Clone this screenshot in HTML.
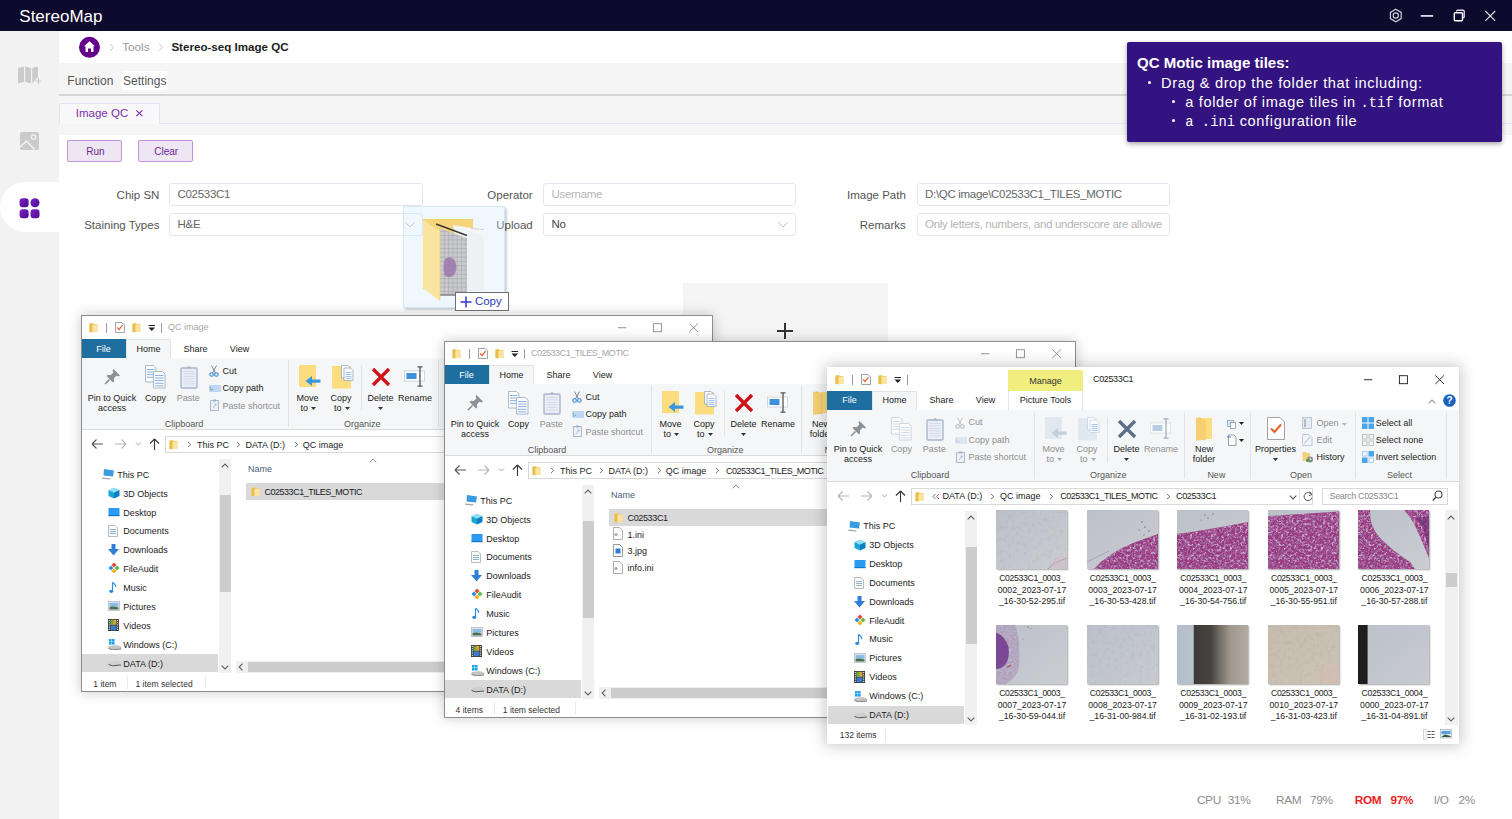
<!DOCTYPE html><html><head><meta charset="utf-8"><title>StereoMap</title><style>
*{margin:0;padding:0;box-sizing:border-box}
html,body{width:1512px;height:819px;overflow:hidden;background:#fff;font-family:"Liberation Sans",sans-serif;position:relative}
.a{position:absolute}
.t{position:absolute;white-space:nowrap;line-height:1}
</style></head><body>
<div class="a" style="left:0;top:0;width:1512px;height:31px;background:#0e0a2e"></div>
<div class="t" style="left:19.3px;top:7.61px;font-size:17px;color:#fff;">StereoMap</div>
<svg class="a" style="left:1380px;top:0" width="132" height="31" viewBox="1380 0 132 31">
<polygon points="1395.8,9.3 1401.2,12.4 1401.2,18.6 1395.8,21.7 1390.4,18.6 1390.4,12.4" fill="none" stroke="#cfcdd8" stroke-width="1.2"/>
<circle cx="1395.8" cy="15.5" r="2.6" fill="none" stroke="#cfcdd8" stroke-width="1.2"/>
<rect x="1420.7" y="15" width="12.4" height="1.8" fill="#dcdae4"/>
<rect x="1454.3" y="12.8" width="8.2" height="8" rx="1" fill="none" stroke="#fff" stroke-width="1.4"/>
<path d="M1456.6 11.5 V11.2 q0-1 1-1 h5.6 q1 0 1 1 v5.6 q0 1 -1 1 h-0.3" fill="none" stroke="#dcdae4" stroke-width="1.4"/>
<path d="M1485.3 11 L1495.2 20.9 M1495.2 11 L1485.3 20.9" stroke="#dcdae4" stroke-width="1.2"/>
</svg>
<div class="a" style="left:0;top:31px;width:59px;height:788px;background:#f2f2f2"></div>
<div class="a" style="left:0;top:182px;width:59px;height:50px;background:#fff;border-radius:25px 0 0 25px"></div>
<svg class="a" style="left:16px;top:64px" width="28" height="22" viewBox="0 0 28 22">
<path d="M2 4 L8 2.5 L8 18 L2 19.5 Z M9.2 2.5 L15 4 L15 19.5 L9.2 18 Z M16.2 4 L22 2.5 L22 13 L16.2 19.5 Z" fill="#cbcbcb"/>
<path d="M22.5 14 v6 M19.5 17 h6" stroke="#cbcbcb" stroke-width="1.1"/>
</svg>
<svg class="a" style="left:19px;top:131px" width="21" height="20" viewBox="0 0 21 20">
<rect x="1" y="1" width="19" height="18" rx="1.5" fill="#cbcbcb"/>
<path d="M0.5 16.5 L7.5 10 L15.5 18.5" stroke="#f2f2f2" stroke-width="1.5" fill="none"/>
<circle cx="14.6" cy="6" r="2.2" fill="none" stroke="#f2f2f2" stroke-width="1.3"/>
</svg>
<svg class="a" style="left:19px;top:197px" width="22" height="22" viewBox="0 0 22 22">
<defs><linearGradient id="pg" x1="0" y1="0" x2="1" y2="1"><stop offset="0" stop-color="#7d22c4"/><stop offset="1" stop-color="#4c0b93"/></linearGradient></defs>
<rect x="0.6" y="1.2" width="9" height="9" rx="3" fill="url(#pg)"/>
<circle cx="16" cy="5.7" r="4.5" fill="url(#pg)"/>
<rect x="0.6" y="12.2" width="9" height="9" rx="3" fill="url(#pg)"/>
<rect x="11.5" y="12.2" width="9" height="9" rx="3" fill="url(#pg)"/>
</svg>
<svg class="a" style="left:78px;top:36px" width="22" height="22" viewBox="0 0 22 22">
<circle cx="11.5" cy="11.3" r="10.5" fill="#64008c"/>
<path d="M11.5 5.2 L17 10.2 L15.5 10.2 L15.5 16 L13 16 L13 12.5 L10 12.5 L10 16 L7.5 16 L7.5 10.2 L6 10.2 Z" fill="#fff"/>
</svg>
<svg class="a" style="left:109px;top:43px" width="6" height="9" viewBox="0 0 6 9"><path d="M1.2 1 L4.6 4.4 L1.2 7.8" fill="none" stroke="#c4c4c4" stroke-width="1"/></svg>
<div class="t" style="left:122.2px;top:40.80px;font-size:11.7px;color:#9a9a9a;">Tools</div>
<svg class="a" style="left:158px;top:43px" width="6" height="9" viewBox="0 0 6 9"><path d="M1.2 1 L4.6 4.4 L1.2 7.8" fill="none" stroke="#c4c4c4" stroke-width="1"/></svg>
<div class="t" style="left:171.4px;top:40.88px;font-size:11.6px;color:#1e1e1e;font-weight:bold">Stereo-seq Image QC</div>
<div class="a" style="left:59px;top:63px;width:1453px;height:72px;background:#f5f5f5"></div>
<div class="a" style="left:59px;top:94px;width:1453px;height:1.5px;background:#d6d6d6"></div>
<div class="a" style="left:120.5px;top:71px;width:47px;height:19px;background:#fff;border-radius:3px"></div>
<div class="t" style="left:67.3px;top:75.04px;font-size:12px;color:#555;">Function</div>
<div class="t" style="left:123.1px;top:75.04px;font-size:12px;color:#555;">Settings</div>
<div class="a" style="left:59px;top:123px;width:1453px;height:1px;background:#e2e6ee"></div>
<div class="a" style="left:59px;top:103px;width:101px;height:21px;background:#f9f9fb;border:1px solid #e0e4ec;border-bottom:none;border-radius:2px 2px 0 0"></div>
<div class="t" style="left:75.8px;top:108.47px;font-size:11.5px;color:#7b2fa8;">Image QC</div>
<svg class="a" style="left:135px;top:109px" width="9" height="9" viewBox="0 0 9 9"><path d="M1.3 1.4 L7.4 7.2 M7.4 1.4 L1.3 7.2" stroke="#7b2fa8" stroke-width="1.1"/></svg>
<div class="a" style="left:67px;top:140px;width:55px;height:22px;background:#efe6f4;border:1px solid #c195d9;border-radius:2px"></div>
<div class="t" style="left:86.2px;top:146.94px;font-size:10px;color:#6a2a92;">Run</div>
<div class="a" style="left:138px;top:140px;width:55px;height:22px;background:#efe6f4;border:1px solid #c195d9;border-radius:2px"></div>
<div class="t" style="left:154.2px;top:146.94px;font-size:10px;color:#6a2a92;">Clear</div>
<div class="t" style="right:1352.6px;top:189.67px;font-size:11.5px;color:#555;text-align:right">Chip SN</div>
<div class="a" style="left:169px;top:183px;width:253.5px;height:23px;border:1px solid #e3e6ec;border-radius:3px;background:#fff"></div>
<div class="t" style="left:177.5px;top:189.17px;font-size:11.5px;letter-spacing:-0.3px;color:#666">C02533C1</div>
<div class="t" style="right:1352.6px;top:219.57px;font-size:11.5px;color:#555;text-align:right">Staining Types</div>
<div class="a" style="left:169px;top:213px;width:253.5px;height:23px;border:1px solid #e3e6ec;border-radius:3px;background:#fff"></div>
<div class="t" style="left:177.5px;top:219.17px;font-size:11.5px;letter-spacing:-0.3px;color:#666">H&amp;E</div>
<svg class="a" style="left:404.5px;top:221.5px" width="10" height="6" viewBox="0 0 10 6"><path d="M0.5 0.5 L5 5 L9.5 0.5" fill="none" stroke="#bbb" stroke-width="1"/></svg>
<div class="t" style="right:979.3px;top:189.67px;font-size:11.5px;color:#555;text-align:right">Operator</div>
<div class="a" style="left:543px;top:183px;width:253px;height:23px;border:1px solid #e3e6ec;border-radius:3px;background:#fff"></div>
<div class="t" style="left:551.5px;top:189.17px;font-size:11.5px;letter-spacing:-0.3px;color:#b5b5b5">Username</div>
<div class="t" style="right:979.3px;top:219.57px;font-size:11.5px;color:#555;text-align:right">Upload</div>
<div class="a" style="left:543px;top:213px;width:253px;height:23px;border:1px solid #e3e6ec;border-radius:3px;background:#fff"></div>
<div class="t" style="left:551.5px;top:219.17px;font-size:11.5px;letter-spacing:-0.3px;color:#444">No</div>
<svg class="a" style="left:778px;top:221.5px" width="10" height="6" viewBox="0 0 10 6"><path d="M0.5 0.5 L5 5 L9.5 0.5" fill="none" stroke="#bbb" stroke-width="1"/></svg>
<div class="t" style="right:606.2px;top:189.67px;font-size:11.5px;color:#555;text-align:right">Image Path</div>
<div class="a" style="left:916.5px;top:183px;width:253.0px;height:23px;border:1px solid #e3e6ec;border-radius:3px;background:#fff"></div>
<div class="t" style="left:925.0px;top:189.17px;font-size:11.5px;letter-spacing:-0.3px;color:#666">D:\QC image\C02533C1_TILES_MOTIC</div>
<div class="t" style="right:606.2px;top:219.57px;font-size:11.5px;color:#555;text-align:right">Remarks</div>
<div class="a" style="left:916.5px;top:213px;width:253.0px;height:23px;border:1px solid #e3e6ec;border-radius:3px;background:#fff"></div>
<div class="t" style="left:925.0px;top:219.17px;font-size:11.5px;letter-spacing:-0.3px;color:#b5b5b5">Only letters, numbers, and underscore are allowe</div>
<div class="a" style="left:683px;top:283px;width:205px;height:205px;background:#f5f5f5"></div>
<div class="a" style="left:777px;top:330px;width:16px;height:1.6px;background:#333"></div>
<div class="a" style="left:784.2px;top:322.5px;width:1.6px;height:16px;background:#333"></div>
<div class="t" style="left:1196.9px;top:795.01px;font-size:11.8px;color:#8c8c8c;letter-spacing:-0.3px">CPU</div>
<div class="t" style="left:1227.7px;top:795.01px;font-size:11.8px;color:#8c8c8c;letter-spacing:-0.3px">31%</div>
<div class="t" style="left:1276px;top:795.01px;font-size:11.8px;color:#8c8c8c;letter-spacing:-0.3px">RAM</div>
<div class="t" style="left:1310px;top:795.01px;font-size:11.8px;color:#8c8c8c;letter-spacing:-0.3px">79%</div>
<div class="t" style="left:1354.7px;top:795.01px;font-size:11.8px;color:#ee1c1c;font-weight:bold;letter-spacing:-0.3px">ROM</div>
<div class="t" style="left:1390.6px;top:795.01px;font-size:11.8px;color:#ee1c1c;font-weight:bold;letter-spacing:-0.3px">97%</div>
<div class="t" style="left:1433.7px;top:795.01px;font-size:11.8px;color:#8c8c8c;letter-spacing:-0.3px">I/O</div>
<div class="t" style="left:1458.4px;top:795.01px;font-size:11.8px;color:#8c8c8c;letter-spacing:-0.3px">2%</div>
<svg width="0" height="0" style="position:absolute">
<defs>
<linearGradient id="tg_grey" x1="0" y1="0" x2="1" y2="1"><stop offset="0" stop-color="#bcc0c8"/><stop offset="1" stop-color="#cacdd2"/></linearGradient>
<linearGradient id="tg_grey2" x1="0" y1="0" x2="1" y2="1"><stop offset="0" stop-color="#bcc1ca"/><stop offset="1" stop-color="#c7cad1"/></linearGradient>
<linearGradient id="tg_beige" x1="0" y1="0" x2="1" y2="1"><stop offset="0" stop-color="#c5bcaf"/><stop offset="1" stop-color="#cdc3b7"/></linearGradient>
<linearGradient id="tg_dark" x1="0" y1="0" x2="1" y2="0"><stop offset="0" stop-color="#b4bfcb"/><stop offset="0.23" stop-color="#b8c1cb"/><stop offset="0.24" stop-color="#3c3a37"/><stop offset="0.48" stop-color="#47443f"/><stop offset="0.62" stop-color="#77726a"/><stop offset="0.75" stop-color="#a0988e"/><stop offset="1" stop-color="#b3aba1"/></linearGradient>
<filter id="hetex" x="0" y="0" width="100%" height="100%">
<feTurbulence type="fractalNoise" baseFrequency="0.38" numOctaves="3" seed="4" result="n"/>
<feColorMatrix in="n" type="matrix" values="0 0 0 0 0.86  0 0 0 0 0.82  0 0 0 0 0.90  -3.2 0 0 0 1.45" result="w"/>
<feColorMatrix in="n" type="matrix" values="0 0 0 0 0.42  0 0 0 0 0.38  0 0 0 0 0.66  0 -2.8 0 0 1.5" result="bl"/>
<feColorMatrix in="n" type="matrix" values="0 0 0 0 0.55  0 0 0 0 0.10  0 0 0 0 0.34  0 0 -2.5 0 1.3" result="rd"/>
<feMerge result="m"><feMergeNode in="rd"/><feMergeNode in="bl"/><feMergeNode in="w"/></feMerge>
<feComposite in="m" in2="SourceAlpha" operator="in"/>
</filter>
<filter id="specks" x="0" y="0" width="100%" height="100%">
<feTurbulence type="fractalNoise" baseFrequency="0.25" numOctaves="2" seed="9" result="n"/>
<feColorMatrix in="n" type="matrix" values="0 0 0 0 0  0 0 0 0 0  0 0 0 0 0  -4 0 0 0 2.1"/>
</filter>
</defs></svg>
<div class="a" style="left:81px;top:315px;width:632px;height:377px;background:#fff;border:1px solid #8c8c8c;box-shadow:0 0 12px 1px rgba(0,0,0,0.18);overflow:hidden"><div class="a" style="left:-1px;top:-1px;width:632px;height:377px"><svg class="a" style="left:8px;top:7px" width="9" height="11" viewBox="0 0 9 11"><path d="M0.5 1 L4 1 L5 2 L8.5 2 L8.5 10 L0.5 10 Z" fill="#f2d27a"/><path d="M0.5 2.5 L3.5 1.6 L3.5 10.4 L0.5 10 Z" fill="#e8bd4a"/><rect x="3.5" y="3" width="5" height="7" fill="#fbe4a0"/></svg><div class="a" style="left:25px;top:8px;width:1px;height:10px;background:#9a9a9a"></div><svg class="a" style="left:34px;top:7px" width="10" height="11" viewBox="0 0 10 11"><path d="M0.5 0.5 H7 L9.5 3 V10.5 H0.5 Z" fill="#fff" stroke="#8a8a8a" stroke-width="0.8"/><path d="M2.2 5.5 L4 7.5 L7.6 3.2" fill="none" stroke="#e8622a" stroke-width="1.2"/></svg><svg class="a" style="left:51px;top:7px" width="9" height="11" viewBox="0 0 9 11"><path d="M0.5 1 L4 1 L5 2 L8.5 2 L8.5 10 L0.5 10 Z" fill="#f2d27a"/><path d="M0.5 2.5 L3.5 1.6 L3.5 10.4 L0.5 10 Z" fill="#e8bd4a"/><rect x="3.5" y="3" width="5" height="7" fill="#fbe4a0"/></svg><svg class="a" style="left:67px;top:9px" width="8" height="8" viewBox="0 0 8 8"><rect x="0.5" y="1" width="6.5" height="1" fill="#222"/><path d="M0.5 3.5 H7 L3.75 7 Z" fill="#222"/></svg><div class="a" style="left:80px;top:8px;width:1px;height:10px;background:#9a9a9a"></div><div class="t" style="left:87px;top:8.35px;font-size:9px;color:#a8a8a8;">QC image</div><svg class="a" style="left:532px;top:5.5px" width="95" height="15" viewBox="0 0 95 15"><rect x="4.8" y="6.3" width="8.5" height="0.9" fill="#8a8a8a"/><rect x="40.4" y="2.7" width="8" height="8" fill="none" stroke="#8a8a8a" stroke-width="0.9"/><path d="M76.3 2.4 L85 11 M85 2.4 L76.3 11" stroke="#8a8a8a" stroke-width="0.9"/></svg><div class="a" style="left:0px;top:24.3px;width:44.8px;height:18.3px;background:#1e6fa0"></div><div class="t" style="left:-37.6px;width:120px;text-align:center;top:29.85px;font-size:9px;color:#fff;">File</div><div class="a" style="left:44.8px;top:24.3px;width:45.5px;height:19px;background:#f5f6f7;border:1px solid #e2e3e4;border-bottom:none"></div><div class="t" style="left:7.5px;width:120px;text-align:center;top:29.85px;font-size:9px;color:#1b1b1b;">Home</div><div class="t" style="left:54.5px;width:120px;text-align:center;top:29.85px;font-size:9px;color:#1b1b1b;">Share</div><div class="t" style="left:98.5px;width:120px;text-align:center;top:29.85px;font-size:9px;color:#1b1b1b;">View</div><div class="a" style="left:0px;top:42.5px;width:632px;height:72.5px;background:#f5f6f7;border-bottom:1px solid #dadbdc"></div><svg class="a" style="left:22.5px;top:53px" width="17" height="17" viewBox="0 0 17 17"><path d="M9.5 1 L16 7.5 L14.5 8.5 L12.6 7.6 L9.8 10.4 L10.2 13.2 L9 14.4 L2.6 8 L3.8 6.8 L6.6 7.2 L9.4 4.4 L8.5 2.5 Z" fill="#8a9097"/><path d="M5.5 11.5 L1 16" stroke="#8a9097" stroke-width="1.6"/></svg><div class="t" style="left:-29px;width:120px;text-align:center;top:79.05px;font-size:9px;color:#1b1b1b;">Pin to Quick</div><div class="t" style="left:-29px;width:120px;text-align:center;top:89.05px;font-size:9px;color:#1b1b1b;">access</div><svg class="a" style="left:64px;top:49.5px" width="21" height="24" viewBox="0 0 21 24"><path d="M0.5 0.5 H8.5 L11 3 V17 H0.5 Z" fill="#fdfdfd" stroke="#9aa8bd" stroke-width="0.8"/><rect x="2" y="4.0" width="7.5" height="0.9" fill="#7aa7e0"/><rect x="2" y="6.6" width="7.5" height="0.9" fill="#7aa7e0"/><rect x="2" y="9.2" width="7.5" height="0.9" fill="#7aa7e0"/><rect x="2" y="11.8" width="7.5" height="0.9" fill="#7aa7e0"/><path d="M8.5 6.5 H17.5 L20 9 V23 H8.5 Z" fill="#fdfdfd" stroke="#9aa8bd" stroke-width="0.8"/><rect x="10" y="10.0" width="8.5" height="0.9" fill="#7aa7e0"/><rect x="10" y="12.6" width="8.5" height="0.9" fill="#7aa7e0"/><rect x="10" y="15.2" width="8.5" height="0.9" fill="#7aa7e0"/><rect x="10" y="17.8" width="8.5" height="0.9" fill="#7aa7e0"/><rect x="10" y="20.4" width="8.5" height="0.9" fill="#7aa7e0"/></svg><div class="t" style="left:14.400000000000006px;width:120px;text-align:center;top:79.05px;font-size:9px;color:#1b1b1b;">Copy</div><svg class="a" style="left:98.5px;top:49.5px" width="18" height="24" viewBox="0 0 18 24"><rect x="1" y="3" width="16" height="20" rx="1" fill="#e9eef6" stroke="#aab7cf" stroke-width="1.4"/><path d="M6 3.5 L9 0.8 L12 3.5 Z" fill="#aab7cf"/><rect x="3.5" y="6.0" width="11" height="0.7" fill="#c9d3e6"/><rect x="3.5" y="8.5" width="11" height="0.7" fill="#c9d3e6"/><rect x="3.5" y="11.0" width="11" height="0.7" fill="#c9d3e6"/><rect x="3.5" y="13.5" width="11" height="0.7" fill="#c9d3e6"/><rect x="3.5" y="16.0" width="11" height="0.7" fill="#c9d3e6"/><rect x="3.5" y="18.5" width="11" height="0.7" fill="#c9d3e6"/></svg><div class="t" style="left:47.2px;width:120px;text-align:center;top:79.05px;font-size:9px;color:#8f8f8f;">Paste</div><svg class="a" style="left:128px;top:49.5px" width="10" height="12" viewBox="0 0 10 12"><path d="M2.5 0.5 L6.5 8 M7.5 0.5 L3.5 8" stroke="#6e7a88" stroke-width="0.9"/><circle cx="2.6" cy="9.5" r="1.8" fill="none" stroke="#3c8ad8" stroke-width="1.1"/><circle cx="7.4" cy="9.5" r="1.8" fill="none" stroke="#3c8ad8" stroke-width="1.1"/></svg><div class="t" style="left:141.5px;top:52.15px;font-size:9px;color:#1b1b1b;">Cut</div><svg class="a" style="left:128px;top:69.5px" width="12" height="7" viewBox="0 0 12 7"><rect x="0" y="0" width="12" height="7" fill="#bcd8f2"/><text x="1" y="5.5" font-size="5" fill="#456" font-family="Liberation Sans">\-</text></svg><div class="t" style="left:141.5px;top:69.45px;font-size:9px;color:#1b1b1b;">Copy path</div><svg class="a" style="left:128.5px;top:84px" width="9" height="12" viewBox="0 0 9 12"><rect x="0.6" y="1.6" width="7.8" height="10" fill="#eef2f8" stroke="#9fb0cc" stroke-width="0.9"/><rect x="3" y="0.5" width="3" height="2" fill="#9fb0cc"/><path d="M3 9 L6 5 M4.5 5 H6 V6.5" stroke="#9fb0cc" stroke-width="0.8" fill="none"/></svg><div class="t" style="left:141.5px;top:86.75px;font-size:9px;color:#8f8f8f;">Paste shortcut</div><div class="t" style="left:43px;width:120px;text-align:center;top:104.85px;font-size:9px;color:#555;">Clipboard</div><div class="a" style="left:207px;top:45px;width:1px;height:67px;background:#e2e3e5"></div><svg class="a" style="left:218px;top:50px" width="22" height="23" viewBox="0 0 22 23"><rect x="0" y="0" width="17" height="22" fill="#fbdc7f"/><path d="M21.5 14.5 H13 V11 L6.5 16 L13 21 V17.8 H21.5 Z" fill="#3a96dd"/></svg><div class="t" style="left:166.5px;width:120px;text-align:center;top:79.05px;font-size:9px;color:#1b1b1b;">Move</div><div class="t" style="left:219.5px;top:89.05px;font-size:9px;color:#1b1b1b;">to</div><svg class="a" style="left:230px;top:91.5px" width="5" height="3" viewBox="0 0 5 3"><path d="M0 0 H5 L2.5 3 Z" fill="#333"/></svg><svg class="a" style="left:251px;top:49.5px" width="23" height="24" viewBox="0 0 23 24"><rect x="0" y="1" width="19" height="22.5" fill="#fbdc7f"/><path d="M9.5 0.5 H16 L18.5 3 V13 H9.5 Z" fill="#fafcff" stroke="#8ea0bb" stroke-width="0.7"/><path d="M12 3 H18.5 L21 5.5 V15.5 H12 Z" fill="#fafcff" stroke="#8ea0bb" stroke-width="0.7"/><rect x="13.5" y="7" width="6" height="0.8" fill="#8db6ea"/><rect x="13.5" y="9" width="6" height="0.8" fill="#8db6ea"/><rect x="13.5" y="11" width="6" height="0.8" fill="#8db6ea"/><rect x="13.5" y="13" width="6" height="0.8" fill="#8db6ea"/></svg><div class="t" style="left:200px;width:120px;text-align:center;top:79.05px;font-size:9px;color:#1b1b1b;">Copy</div><div class="t" style="left:253px;top:89.05px;font-size:9px;color:#1b1b1b;">to</div><svg class="a" style="left:263.5px;top:91.5px" width="5" height="3" viewBox="0 0 5 3"><path d="M0 0 H5 L2.5 3 Z" fill="#333"/></svg><div class="a" style="left:280px;top:50px;width:1px;height:45px;background:#e2e3e5"></div><svg class="a" style="left:289.5px;top:52px" width="20" height="20" viewBox="0 0 20 20"><path d="M2 2 L18 18 M18 2 L2 18" stroke="#d0121b" stroke-width="3.4"/></svg><div class="t" style="left:239.5px;width:120px;text-align:center;top:79.05px;font-size:9px;color:#1b1b1b;">Delete</div><svg class="a" style="left:297px;top:92px" width="5" height="3" viewBox="0 0 5 3"><path d="M0 0 H5 L2.5 3 Z" fill="#333"/></svg><svg class="a" style="left:322.5px;top:51px" width="23" height="21" viewBox="0 0 23 21"><rect x="0.5" y="5" width="20" height="10" fill="#fff" stroke="#cfd6df" stroke-width="1"/><rect x="2.5" y="7" width="10" height="6" fill="#3d91dd"/><path d="M16 1 V20 M13.5 0.8 H18.5 M13.5 20.2 H18.5" stroke="#555" stroke-width="1.3"/></svg><div class="t" style="left:274px;width:120px;text-align:center;top:79.05px;font-size:9px;color:#1b1b1b;">Rename</div><div class="t" style="left:221.3px;width:120px;text-align:center;top:104.85px;font-size:9px;color:#555;">Organize</div><div class="a" style="left:357px;top:45px;width:1px;height:67px;background:#e2e3e5"></div><svg class="a" style="left:368px;top:50px" width="18" height="24" viewBox="0 0 18 24"><path d="M1 1 L6 0.5 L6 22 L1 23.5 Z" fill="#e9c25a"/><rect x="6" y="1" width="11" height="21" fill="#fbdc7f"/><path d="M1 1 L11 3 V23 L1 23.5 Z" fill="#f6d070"/></svg><div class="t" style="left:317px;width:120px;text-align:center;top:79.05px;font-size:9px;color:#1b1b1b;">New</div><div class="t" style="left:317px;width:120px;text-align:center;top:89.05px;font-size:9px;color:#1b1b1b;">folder</div><svg class="a" style="left:400px;top:51px" width="17" height="11" viewBox="0 0 17 11"><rect x="0.5" y="2.5" width="6" height="6" fill="#dde9f7" stroke="#6c9bd2" stroke-width="0.7"/><rect x="3.5" y="4.5" width="5" height="6" fill="#fff" stroke="#888" stroke-width="0.7"/><path d="M12 4 H17 L14.5 7 Z" fill="#222"/></svg><svg class="a" style="left:400px;top:67px" width="17" height="12" viewBox="0 0 17 12"><path d="M1.5 1 H7 L9 3 V11.5 H1.5 Z" fill="#fff" stroke="#777" stroke-width="0.7"/><path d="M0 3 H4" stroke="#3b7fd0" stroke-width="1"/><path d="M12 5 H17 L14.5 8 Z" fill="#222"/></svg><div class="t" style="left:329.4px;width:120px;text-align:center;top:104.85px;font-size:9px;color:#555;">New</div><div class="a" style="left:423px;top:45px;width:1px;height:67px;background:#e2e3e5"></div><svg class="a" style="left:439.5px;top:50px" width="18" height="23" viewBox="0 0 18 23"><path d="M0.5 0.5 H13 L17.5 5 V22.5 H0.5 Z" fill="#fff" stroke="#8e8e8e" stroke-width="0.8"/><path d="M4 11.5 L7.5 15 L14 7.5" fill="none" stroke="#e8622a" stroke-width="2"/></svg><div class="t" style="left:388.4px;width:120px;text-align:center;top:79.05px;font-size:9px;color:#1b1b1b;">Properties</div><svg class="a" style="left:446px;top:92px" width="5" height="3" viewBox="0 0 5 3"><path d="M0 0 H5 L2.5 3 Z" fill="#333"/></svg><svg class="a" style="left:474.5px;top:50px" width="11" height="12" viewBox="0 0 11 12"><rect x="0.5" y="0.5" width="9" height="11" fill="#e4ebf3" stroke="#a8b6c6" stroke-width="0.7"/><rect x="2" y="2" width="2" height="8" fill="#b0bccb"/></svg><div class="t" style="left:489.4px;top:52.65px;font-size:9px;color:#8f8f8f;">Open</div><svg class="a" style="left:514.5px;top:56.5px" width="5" height="3" viewBox="0 0 5 3"><path d="M0 0 H5 L2.5 3 Z" fill="#bbb"/></svg><svg class="a" style="left:474.5px;top:67px" width="11" height="12" viewBox="0 0 11 12"><path d="M0.5 0.5 H7 L10 3.5 V11.5 H0.5 Z" fill="#f0f4f8" stroke="#a8b6c6" stroke-width="0.7"/><path d="M2.5 9.5 L8 3" stroke="#9fb5d0" stroke-width="1"/></svg><div class="t" style="left:489.4px;top:69.85px;font-size:9px;color:#8f8f8f;">Edit</div><svg class="a" style="left:474.5px;top:84px" width="12" height="12" viewBox="0 0 12 12"><path d="M0.5 1 H4 L5 2 H8 V10 H0.5 Z" fill="#f2d27a"/><circle cx="8" cy="8.5" r="3" fill="#8a8a8a"/><path d="M8 6.8 V8.5 H9.5" stroke="#fff" stroke-width="0.7" fill="none"/><circle cx="5.5" cy="9.5" r="1.6" fill="#3caa3c"/></svg><div class="t" style="left:489.4px;top:87.05px;font-size:9px;color:#1b1b1b;">History</div><div class="t" style="left:414px;width:120px;text-align:center;top:104.85px;font-size:9px;color:#555;">Open</div><div class="a" style="left:527.5px;top:45px;width:1px;height:67px;background:#e2e3e5"></div><svg class="a" style="left:534.5px;top:50px" width="12" height="12" viewBox="0 0 12 12"><rect x="0" y="0" width="5.5" height="5.5" fill="#49a4ea"/><rect x="6.5" y="0" width="5.5" height="5.5" fill="#49a4ea"/><rect x="0" y="6.5" width="5.5" height="5.5" fill="#49a4ea"/><rect x="6.5" y="6.5" width="5.5" height="5.5" fill="#49a4ea"/></svg><div class="t" style="left:548.8px;top:52.65px;font-size:9px;color:#1b1b1b;">Select all</div><svg class="a" style="left:534.5px;top:67px" width="12" height="12" viewBox="0 0 12 12"><rect x="0.5" y="0.5" width="4.5" height="4.5" fill="none" stroke="#b5b5b5" stroke-width="0.8"/><rect x="0.5" y="7.0" width="4.5" height="4.5" fill="none" stroke="#b5b5b5" stroke-width="0.8"/><rect x="7.0" y="0.5" width="4.5" height="4.5" fill="none" stroke="#b5b5b5" stroke-width="0.8"/><rect x="7.0" y="7.0" width="4.5" height="4.5" fill="none" stroke="#b5b5b5" stroke-width="0.8"/></svg><div class="t" style="left:548.8px;top:69.85px;font-size:9px;color:#1b1b1b;">Select none</div><svg class="a" style="left:534.5px;top:84px" width="12" height="12" viewBox="0 0 12 12"><rect x="0.5" y="0.5" width="4.5" height="4.5" fill="none" stroke="#9cc8ef" stroke-width="0.8"/><rect x="6.5" y="0" width="5.5" height="5.5" fill="#49a4ea"/><rect x="0" y="6.5" width="5.5" height="5.5" fill="#49a4ea"/><rect x="7" y="7" width="4.5" height="4.5" fill="none" stroke="#9cc8ef" stroke-width="0.8"/></svg><div class="t" style="left:548.8px;top:87.05px;font-size:9px;color:#1b1b1b;">Invert selection</div><div class="t" style="left:512.4px;width:120px;text-align:center;top:104.85px;font-size:9px;color:#555;">Select</div><div class="a" style="left:618.7px;top:45px;width:1px;height:67px;background:#e2e3e5"></div><svg class="a" style="left:600.5px;top:31.5px" width="8" height="5" viewBox="0 0 8 5"><path d="M0.7 4.3 L4 1 L7.3 4.3" fill="none" stroke="#9a9a9a" stroke-width="1.1"/></svg><svg class="a" style="left:616px;top:27px" width="13" height="13" viewBox="0 0 13 13"><circle cx="6.5" cy="6.5" r="6.3" fill="#1a62c0"/><text x="6.5" y="10.3" font-size="10" font-weight="bold" fill="#fff" text-anchor="middle" font-family="Liberation Sans">?</text></svg><svg class="a" style="left:8px;top:121px" width="80" height="16" viewBox="0 0 80 16"><path d="M3 8 H14 M3 8 L7.5 3.5 M3 8 L7.5 12.5" stroke="#555" stroke-width="1.1" fill="none"/><path d="M26 8 H37 M37 8 L32.5 3.5 M37 8 L32.5 12.5" stroke="#b5b5b5" stroke-width="1.1" fill="none"/><path d="M47 6.5 L49.5 9 L52 6.5" stroke="#999" stroke-width="0.9" fill="none"/><path d="M65.5 14 V3 M65.5 3 L61 7.5 M65.5 3 L70 7.5" stroke="#333" stroke-width="1.1" fill="none"/></svg><div class="a" style="left:84px;top:120.5px;width:401.5px;height:17.5px;background:#fff;border:1px solid #d9d9d9"></div><svg class="a" style="left:88px;top:124px" width="9" height="11" viewBox="0 0 9 11"><path d="M0.5 1 L4 1 L5 2 L8.5 2 L8.5 10 L0.5 10 Z" fill="#f2d27a"/><path d="M0.5 2.5 L3.5 1.6 L3.5 10.4 L0.5 10 Z" fill="#e8bd4a"/><rect x="3.5" y="3" width="5" height="7" fill="#fbe4a0"/></svg><div class="a" style="left:472px;top:121px;width:1px;height:16px;background:#e5e5e5"></div><svg class="a" style="left:475px;top:123px" width="12" height="12" viewBox="0 0 12 12"><path d="M9.5 4.5 A4 4 0 1 0 10 7.5" stroke="#555" stroke-width="1" fill="none"/><path d="M7.5 1.5 L10 4.5 L7 5.5" stroke="#555" stroke-width="1" fill="none"/></svg><svg class="a" style="left:461.5px;top:127.5px" width="8" height="5" viewBox="0 0 8 5"><path d="M0.7 0.7 L4 4 L7.3 0.7" fill="none" stroke="#555" stroke-width="1.1"/></svg><div class="a" style="left:495.3px;top:120.5px;width:125.6px;height:17.5px;background:#fff;border:1px solid #d9d9d9"></div><div class="t" style="left:502.5px;top:126.15px;font-size:9px;color:#8a8a8a;">Search QC image</div><svg class="a" style="left:605px;top:123px" width="11" height="12" viewBox="0 0 11 12"><circle cx="6.5" cy="4.5" r="3.5" fill="none" stroke="#444" stroke-width="1.1"/><path d="M4 7 L0.8 10.5" stroke="#444" stroke-width="1.3"/></svg><svg class="a" style="left:106px;top:126px" width="5" height="7" viewBox="0 0 5 7"><path d="M1 1 L3.8 3.5 L1 6" fill="none" stroke="#666" stroke-width="0.9"/></svg><div class="t" style="left:116px;top:126.15px;font-size:9px;color:#1b1b1b;">This PC</div><svg class="a" style="left:155px;top:126px" width="5" height="7" viewBox="0 0 5 7"><path d="M1 1 L3.8 3.5 L1 6" fill="none" stroke="#666" stroke-width="0.9"/></svg><div class="t" style="left:164.4px;top:126.15px;font-size:9px;color:#1b1b1b;">DATA (D:)</div><svg class="a" style="left:212.7px;top:126px" width="5" height="7" viewBox="0 0 5 7"><path d="M1 1 L3.8 3.5 L1 6" fill="none" stroke="#666" stroke-width="0.9"/></svg><div class="t" style="left:221.7px;top:126.15px;font-size:9px;color:#1b1b1b;">QC image</div><div class="a" style="left:137.5px;top:143.5px;width:12.8px;height:214.5px;background:#f0f0f0"></div><div class="a" style="left:138.5px;top:180px;width:11px;height:97px;background:#cdcdcd"></div><svg class="a" style="left:140px;top:147.5px" width="8" height="5" viewBox="0 0 8 5"><path d="M0.7 4.3 L4 1 L7.3 4.3" fill="none" stroke="#606060" stroke-width="1.1"/></svg><svg class="a" style="left:140px;top:349.5px" width="8" height="5" viewBox="0 0 8 5"><path d="M0.7 0.7 L4 4 L7.3 0.7" fill="none" stroke="#606060" stroke-width="1.1"/></svg><div class="a" style="left:1px;top:339px;width:136px;height:18.3px;background:#d9d9d9"></div><svg class="a" style="left:20.5px;top:152.8px" width="13" height="12" viewBox="0 0 13 12"><path d="M2 1 L12 2.5 L11 8.5 L1.5 7.5 Z" fill="#3b9be0"/><path d="M0.5 9.5 L9 10.5 L7.5 11.5 L0 10.8 Z" fill="#9aa3ad"/></svg><div class="t" style="left:36.3px;top:155.65px;font-size:9px;color:#1b1b1b;">This PC</div><svg class="a" style="left:26.5px;top:171.73000000000002px" width="12" height="12" viewBox="0 0 12 12"><path d="M6 0.5 L11.5 3 L6 5.5 L0.5 3 Z" fill="#8be0f5"/><path d="M0.5 3 L6 5.5 V11.5 L0.5 9 Z" fill="#1aa5d8"/><path d="M11.5 3 L6 5.5 V11.5 L11.5 9 Z" fill="#0b7fbf"/></svg><div class="t" style="left:42.3px;top:174.58px;font-size:9px;color:#1b1b1b;">3D Objects</div><svg class="a" style="left:26.5px;top:191.66000000000003px" width="12" height="10" viewBox="0 0 12 10"><rect x="0.5" y="1" width="11" height="8" fill="#2a9bf5"/><rect x="0.5" y="8" width="11" height="1.2" fill="#1677c9"/></svg><div class="t" style="left:42.3px;top:193.51px;font-size:9px;color:#1b1b1b;">Desktop</div><svg class="a" style="left:26.5px;top:209.59px" width="10" height="12" viewBox="0 0 10 12"><path d="M0.5 0.5 H7 L9.5 3 V11.5 H0.5 Z" fill="#fafafa" stroke="#a0a0a0" stroke-width="0.7"/><rect x="2" y="4" width="6" height="0.8" fill="#7aa0c8"/><rect x="2" y="6" width="6" height="0.8" fill="#7aa0c8"/><rect x="2" y="8" width="6" height="0.8" fill="#7aa0c8"/></svg><div class="t" style="left:42.3px;top:212.44px;font-size:9px;color:#1b1b1b;">Documents</div><svg class="a" style="left:26.5px;top:228.52px" width="11" height="12" viewBox="0 0 11 12"><rect x="3.5" y="0" width="4" height="6" fill="#2f7fd6"/><path d="M0 5 H11 L5.5 11.5 Z" fill="#2f7fd6"/></svg><div class="t" style="left:42.3px;top:231.37px;font-size:9px;color:#1b1b1b;">Downloads</div><svg class="a" style="left:26.5px;top:247.45000000000002px" width="12" height="12" viewBox="0 0 12 12"><path d="M6 0.5 L8.5 3 L6 5.5 L3.5 3 Z" fill="#e8463a"/><path d="M3 3.5 L5.5 6 L3 8.5 L0.5 6 Z" fill="#2f8fe0"/><path d="M9 3.5 L11.5 6 L9 8.5 L6.5 6 Z" fill="#5cbc4a"/><path d="M6 6.5 L8.5 9 L6 11.5 L3.5 9 Z" fill="#f5b01a"/></svg><div class="t" style="left:42.3px;top:250.30px;font-size:9px;color:#1b1b1b;">FileAudit</div><svg class="a" style="left:26.5px;top:266.38px" width="10" height="13" viewBox="0 0 10 13"><path d="M4.5 1.5 V10" stroke="#2d8be0" stroke-width="1.2"/><path d="M4.5 1.2 Q7.5 3 8 5.8" stroke="#2d8be0" stroke-width="1.1" fill="none"/><ellipse cx="3.2" cy="10.3" rx="2" ry="1.6" fill="#2d8be0"/></svg><div class="t" style="left:42.3px;top:269.23px;font-size:9px;color:#1b1b1b;">Music</div><svg class="a" style="left:26.5px;top:286.31px" width="12" height="10" viewBox="0 0 12 10"><rect x="0.5" y="0.5" width="11" height="9" fill="#eef1f4" stroke="#a7b0ba" stroke-width="0.7"/><rect x="1.5" y="1.8" width="9" height="4" fill="#8cbbe6"/><path d="M1.5 8.5 L1.5 6 Q5 4.8 10.5 6.5 V8.5 Z" fill="#4a6e4a"/></svg><div class="t" style="left:42.3px;top:288.16px;font-size:9px;color:#1b1b1b;">Pictures</div><svg class="a" style="left:26.5px;top:304.24px" width="11" height="12" viewBox="0 0 11 12"><rect x="0" y="0" width="11" height="12" fill="#3a3a3a"/><rect x="2.6" y="0.8" width="5.8" height="5" fill="#e0a030"/><rect x="2.6" y="1" width="2.8" height="4.8" fill="#5ab040"/><rect x="2.6" y="6.4" width="5.8" height="4.8" fill="#3d7cc9"/><rect x="0.8" y="1.0" width="1.2" height="1.1" fill="#ddd"/><rect x="9" y="1.0" width="1.2" height="1.1" fill="#ddd"/><rect x="0.8" y="3.2" width="1.2" height="1.1" fill="#ddd"/><rect x="9" y="3.2" width="1.2" height="1.1" fill="#ddd"/><rect x="0.8" y="5.4" width="1.2" height="1.1" fill="#ddd"/><rect x="9" y="5.4" width="1.2" height="1.1" fill="#ddd"/><rect x="0.8" y="7.6" width="1.2" height="1.1" fill="#ddd"/><rect x="9" y="7.6" width="1.2" height="1.1" fill="#ddd"/><rect x="0.8" y="9.8" width="1.2" height="1.1" fill="#ddd"/><rect x="9" y="9.8" width="1.2" height="1.1" fill="#ddd"/></svg><div class="t" style="left:42.3px;top:307.09px;font-size:9px;color:#1b1b1b;">Videos</div><svg class="a" style="left:26.5px;top:323.67px" width="14" height="11" viewBox="0 0 14 11"><rect x="1" y="0" width="2.6" height="2.6" fill="#1fa1f0"/><rect x="4" y="0" width="2.6" height="2.6" fill="#1fa1f0"/><rect x="1" y="3" width="2.6" height="2.6" fill="#1fa1f0"/><rect x="4" y="3" width="2.6" height="2.6" fill="#1fa1f0"/><path d="M0.5 7 L9 6 L13.5 8 L13 10 L4.5 10.8 L0.5 9.5 Z" fill="#c4c4c4"/><path d="M0.5 9.5 L4.5 10.8 L13 10 " stroke="#6a6a6a" stroke-width="0.8" fill="none"/></svg><div class="t" style="left:42.3px;top:326.02px;font-size:9px;color:#1b1b1b;">Windows (C:)</div><svg class="a" style="left:26.5px;top:344.1px" width="14" height="8" viewBox="0 0 14 8"><path d="M0.5 3 L9 2 L13.5 4 L13 6 L4.5 6.8 L0.5 5.5 Z" fill="#cfcfcf"/><path d="M0.5 5.5 L4.5 6.8 L13 6" stroke="#4a4a4a" stroke-width="0.9" fill="none"/></svg><div class="t" style="left:42.3px;top:344.95px;font-size:9px;color:#1b1b1b;">DATA (D:)</div><div class="t" style="left:167px;top:150.15px;font-size:9px;color:#4c607a;">Name</div><svg class="a" style="left:287.5px;top:143px" width="8" height="5" viewBox="0 0 8 5"><path d="M0.7 4.3 L4 1 L7.3 4.3" fill="none" stroke="#888" stroke-width="0.9"/></svg><div class="a" style="left:165px;top:168px;width:500px;height:16.8px;background:#d9d9d9"></div><svg class="a" style="left:170px;top:170.8px" width="9" height="11" viewBox="0 0 9 11"><path d="M0.5 1 L4 1 L5 2 L8.5 2 L8.5 10 L0.5 10 Z" fill="#f2d27a"/><path d="M0.5 2.5 L3.5 1.6 L3.5 10.4 L0.5 10 Z" fill="#e8bd4a"/><rect x="3.5" y="3" width="5" height="7" fill="#fbe4a0"/></svg><div class="t" style="left:183.5px;top:173.15px;font-size:9px;color:#1b1b1b;letter-spacing:-0.48px;">C02533C1_TILES_MOTIC</div><div class="a" style="left:154.5px;top:346px;width:480px;height:11.5px;background:#f0f0f0"></div><div class="a" style="left:166.5px;top:346.5px;width:470px;height:10.5px;background:#cdcdcd"></div><svg class="a" style="left:157px;top:348px" width="6" height="8" viewBox="0 0 6 8"><path d="M4.5 0.7 L1.2 4 L4.5 7.3" fill="none" stroke="#606060" stroke-width="1.1"/></svg><div class="t" style="left:12.3px;top:364.73px;font-size:8.5px;color:#333;">1 item</div><div class="t" style="left:54.5px;top:364.73px;font-size:8.5px;color:#333;">1 item selected</div><div class="a" style="left:46px;top:361px;width:1px;height:13px;background:#e8e8e8"></div><div class="a" style="left:123.6px;top:361px;width:1px;height:13px;background:#e8e8e8"></div></div></div>
<div class="a" style="left:444px;top:341px;width:632px;height:377px;background:#fff;border:1px solid #8c8c8c;box-shadow:0 0 12px 1px rgba(0,0,0,0.18);overflow:hidden"><div class="a" style="left:-1px;top:-1px;width:632px;height:377px"><svg class="a" style="left:8px;top:7px" width="9" height="11" viewBox="0 0 9 11"><path d="M0.5 1 L4 1 L5 2 L8.5 2 L8.5 10 L0.5 10 Z" fill="#f2d27a"/><path d="M0.5 2.5 L3.5 1.6 L3.5 10.4 L0.5 10 Z" fill="#e8bd4a"/><rect x="3.5" y="3" width="5" height="7" fill="#fbe4a0"/></svg><div class="a" style="left:25px;top:8px;width:1px;height:10px;background:#9a9a9a"></div><svg class="a" style="left:34px;top:7px" width="10" height="11" viewBox="0 0 10 11"><path d="M0.5 0.5 H7 L9.5 3 V10.5 H0.5 Z" fill="#fff" stroke="#8a8a8a" stroke-width="0.8"/><path d="M2.2 5.5 L4 7.5 L7.6 3.2" fill="none" stroke="#e8622a" stroke-width="1.2"/></svg><svg class="a" style="left:51px;top:7px" width="9" height="11" viewBox="0 0 9 11"><path d="M0.5 1 L4 1 L5 2 L8.5 2 L8.5 10 L0.5 10 Z" fill="#f2d27a"/><path d="M0.5 2.5 L3.5 1.6 L3.5 10.4 L0.5 10 Z" fill="#e8bd4a"/><rect x="3.5" y="3" width="5" height="7" fill="#fbe4a0"/></svg><svg class="a" style="left:67px;top:9px" width="8" height="8" viewBox="0 0 8 8"><rect x="0.5" y="1" width="6.5" height="1" fill="#222"/><path d="M0.5 3.5 H7 L3.75 7 Z" fill="#222"/></svg><div class="a" style="left:80px;top:8px;width:1px;height:10px;background:#9a9a9a"></div><div class="t" style="left:87px;top:8.35px;font-size:9px;color:#a8a8a8;letter-spacing:-0.48px;">C02533C1_TILES_MOTIC</div><svg class="a" style="left:532px;top:5.5px" width="95" height="15" viewBox="0 0 95 15"><rect x="4.8" y="6.3" width="8.5" height="0.9" fill="#8a8a8a"/><rect x="40.4" y="2.7" width="8" height="8" fill="none" stroke="#8a8a8a" stroke-width="0.9"/><path d="M76.3 2.4 L85 11 M85 2.4 L76.3 11" stroke="#8a8a8a" stroke-width="0.9"/></svg><div class="a" style="left:0px;top:24.3px;width:44.8px;height:18.3px;background:#1e6fa0"></div><div class="t" style="left:-37.6px;width:120px;text-align:center;top:29.85px;font-size:9px;color:#fff;">File</div><div class="a" style="left:44.8px;top:24.3px;width:45.5px;height:19px;background:#f5f6f7;border:1px solid #e2e3e4;border-bottom:none"></div><div class="t" style="left:7.5px;width:120px;text-align:center;top:29.85px;font-size:9px;color:#1b1b1b;">Home</div><div class="t" style="left:54.5px;width:120px;text-align:center;top:29.85px;font-size:9px;color:#1b1b1b;">Share</div><div class="t" style="left:98.5px;width:120px;text-align:center;top:29.85px;font-size:9px;color:#1b1b1b;">View</div><div class="a" style="left:0px;top:42.5px;width:632px;height:72.5px;background:#f5f6f7;border-bottom:1px solid #dadbdc"></div><svg class="a" style="left:22.5px;top:53px" width="17" height="17" viewBox="0 0 17 17"><path d="M9.5 1 L16 7.5 L14.5 8.5 L12.6 7.6 L9.8 10.4 L10.2 13.2 L9 14.4 L2.6 8 L3.8 6.8 L6.6 7.2 L9.4 4.4 L8.5 2.5 Z" fill="#8a9097"/><path d="M5.5 11.5 L1 16" stroke="#8a9097" stroke-width="1.6"/></svg><div class="t" style="left:-29px;width:120px;text-align:center;top:79.05px;font-size:9px;color:#1b1b1b;">Pin to Quick</div><div class="t" style="left:-29px;width:120px;text-align:center;top:89.05px;font-size:9px;color:#1b1b1b;">access</div><svg class="a" style="left:64px;top:49.5px" width="21" height="24" viewBox="0 0 21 24"><path d="M0.5 0.5 H8.5 L11 3 V17 H0.5 Z" fill="#fdfdfd" stroke="#9aa8bd" stroke-width="0.8"/><rect x="2" y="4.0" width="7.5" height="0.9" fill="#7aa7e0"/><rect x="2" y="6.6" width="7.5" height="0.9" fill="#7aa7e0"/><rect x="2" y="9.2" width="7.5" height="0.9" fill="#7aa7e0"/><rect x="2" y="11.8" width="7.5" height="0.9" fill="#7aa7e0"/><path d="M8.5 6.5 H17.5 L20 9 V23 H8.5 Z" fill="#fdfdfd" stroke="#9aa8bd" stroke-width="0.8"/><rect x="10" y="10.0" width="8.5" height="0.9" fill="#7aa7e0"/><rect x="10" y="12.6" width="8.5" height="0.9" fill="#7aa7e0"/><rect x="10" y="15.2" width="8.5" height="0.9" fill="#7aa7e0"/><rect x="10" y="17.8" width="8.5" height="0.9" fill="#7aa7e0"/><rect x="10" y="20.4" width="8.5" height="0.9" fill="#7aa7e0"/></svg><div class="t" style="left:14.400000000000006px;width:120px;text-align:center;top:79.05px;font-size:9px;color:#1b1b1b;">Copy</div><svg class="a" style="left:98.5px;top:49.5px" width="18" height="24" viewBox="0 0 18 24"><rect x="1" y="3" width="16" height="20" rx="1" fill="#e9eef6" stroke="#aab7cf" stroke-width="1.4"/><path d="M6 3.5 L9 0.8 L12 3.5 Z" fill="#aab7cf"/><rect x="3.5" y="6.0" width="11" height="0.7" fill="#c9d3e6"/><rect x="3.5" y="8.5" width="11" height="0.7" fill="#c9d3e6"/><rect x="3.5" y="11.0" width="11" height="0.7" fill="#c9d3e6"/><rect x="3.5" y="13.5" width="11" height="0.7" fill="#c9d3e6"/><rect x="3.5" y="16.0" width="11" height="0.7" fill="#c9d3e6"/><rect x="3.5" y="18.5" width="11" height="0.7" fill="#c9d3e6"/></svg><div class="t" style="left:47.2px;width:120px;text-align:center;top:79.05px;font-size:9px;color:#8f8f8f;">Paste</div><svg class="a" style="left:128px;top:49.5px" width="10" height="12" viewBox="0 0 10 12"><path d="M2.5 0.5 L6.5 8 M7.5 0.5 L3.5 8" stroke="#6e7a88" stroke-width="0.9"/><circle cx="2.6" cy="9.5" r="1.8" fill="none" stroke="#3c8ad8" stroke-width="1.1"/><circle cx="7.4" cy="9.5" r="1.8" fill="none" stroke="#3c8ad8" stroke-width="1.1"/></svg><div class="t" style="left:141.5px;top:52.15px;font-size:9px;color:#1b1b1b;">Cut</div><svg class="a" style="left:128px;top:69.5px" width="12" height="7" viewBox="0 0 12 7"><rect x="0" y="0" width="12" height="7" fill="#bcd8f2"/><text x="1" y="5.5" font-size="5" fill="#456" font-family="Liberation Sans">\-</text></svg><div class="t" style="left:141.5px;top:69.45px;font-size:9px;color:#1b1b1b;">Copy path</div><svg class="a" style="left:128.5px;top:84px" width="9" height="12" viewBox="0 0 9 12"><rect x="0.6" y="1.6" width="7.8" height="10" fill="#eef2f8" stroke="#9fb0cc" stroke-width="0.9"/><rect x="3" y="0.5" width="3" height="2" fill="#9fb0cc"/><path d="M3 9 L6 5 M4.5 5 H6 V6.5" stroke="#9fb0cc" stroke-width="0.8" fill="none"/></svg><div class="t" style="left:141.5px;top:86.75px;font-size:9px;color:#8f8f8f;">Paste shortcut</div><div class="t" style="left:43px;width:120px;text-align:center;top:104.85px;font-size:9px;color:#555;">Clipboard</div><div class="a" style="left:207px;top:45px;width:1px;height:67px;background:#e2e3e5"></div><svg class="a" style="left:218px;top:50px" width="22" height="23" viewBox="0 0 22 23"><rect x="0" y="0" width="17" height="22" fill="#fbdc7f"/><path d="M21.5 14.5 H13 V11 L6.5 16 L13 21 V17.8 H21.5 Z" fill="#3a96dd"/></svg><div class="t" style="left:166.5px;width:120px;text-align:center;top:79.05px;font-size:9px;color:#1b1b1b;">Move</div><div class="t" style="left:219.5px;top:89.05px;font-size:9px;color:#1b1b1b;">to</div><svg class="a" style="left:230px;top:91.5px" width="5" height="3" viewBox="0 0 5 3"><path d="M0 0 H5 L2.5 3 Z" fill="#333"/></svg><svg class="a" style="left:251px;top:49.5px" width="23" height="24" viewBox="0 0 23 24"><rect x="0" y="1" width="19" height="22.5" fill="#fbdc7f"/><path d="M9.5 0.5 H16 L18.5 3 V13 H9.5 Z" fill="#fafcff" stroke="#8ea0bb" stroke-width="0.7"/><path d="M12 3 H18.5 L21 5.5 V15.5 H12 Z" fill="#fafcff" stroke="#8ea0bb" stroke-width="0.7"/><rect x="13.5" y="7" width="6" height="0.8" fill="#8db6ea"/><rect x="13.5" y="9" width="6" height="0.8" fill="#8db6ea"/><rect x="13.5" y="11" width="6" height="0.8" fill="#8db6ea"/><rect x="13.5" y="13" width="6" height="0.8" fill="#8db6ea"/></svg><div class="t" style="left:200px;width:120px;text-align:center;top:79.05px;font-size:9px;color:#1b1b1b;">Copy</div><div class="t" style="left:253px;top:89.05px;font-size:9px;color:#1b1b1b;">to</div><svg class="a" style="left:263.5px;top:91.5px" width="5" height="3" viewBox="0 0 5 3"><path d="M0 0 H5 L2.5 3 Z" fill="#333"/></svg><div class="a" style="left:280px;top:50px;width:1px;height:45px;background:#e2e3e5"></div><svg class="a" style="left:289.5px;top:52px" width="20" height="20" viewBox="0 0 20 20"><path d="M2 2 L18 18 M18 2 L2 18" stroke="#d0121b" stroke-width="3.4"/></svg><div class="t" style="left:239.5px;width:120px;text-align:center;top:79.05px;font-size:9px;color:#1b1b1b;">Delete</div><svg class="a" style="left:297px;top:92px" width="5" height="3" viewBox="0 0 5 3"><path d="M0 0 H5 L2.5 3 Z" fill="#333"/></svg><svg class="a" style="left:322.5px;top:51px" width="23" height="21" viewBox="0 0 23 21"><rect x="0.5" y="5" width="20" height="10" fill="#fff" stroke="#cfd6df" stroke-width="1"/><rect x="2.5" y="7" width="10" height="6" fill="#3d91dd"/><path d="M16 1 V20 M13.5 0.8 H18.5 M13.5 20.2 H18.5" stroke="#555" stroke-width="1.3"/></svg><div class="t" style="left:274px;width:120px;text-align:center;top:79.05px;font-size:9px;color:#1b1b1b;">Rename</div><div class="t" style="left:221.3px;width:120px;text-align:center;top:104.85px;font-size:9px;color:#555;">Organize</div><div class="a" style="left:357px;top:45px;width:1px;height:67px;background:#e2e3e5"></div><svg class="a" style="left:368px;top:50px" width="18" height="24" viewBox="0 0 18 24"><path d="M1 1 L6 0.5 L6 22 L1 23.5 Z" fill="#e9c25a"/><rect x="6" y="1" width="11" height="21" fill="#fbdc7f"/><path d="M1 1 L11 3 V23 L1 23.5 Z" fill="#f6d070"/></svg><div class="t" style="left:317px;width:120px;text-align:center;top:79.05px;font-size:9px;color:#1b1b1b;">New</div><div class="t" style="left:317px;width:120px;text-align:center;top:89.05px;font-size:9px;color:#1b1b1b;">folder</div><svg class="a" style="left:400px;top:51px" width="17" height="11" viewBox="0 0 17 11"><rect x="0.5" y="2.5" width="6" height="6" fill="#dde9f7" stroke="#6c9bd2" stroke-width="0.7"/><rect x="3.5" y="4.5" width="5" height="6" fill="#fff" stroke="#888" stroke-width="0.7"/><path d="M12 4 H17 L14.5 7 Z" fill="#222"/></svg><svg class="a" style="left:400px;top:67px" width="17" height="12" viewBox="0 0 17 12"><path d="M1.5 1 H7 L9 3 V11.5 H1.5 Z" fill="#fff" stroke="#777" stroke-width="0.7"/><path d="M0 3 H4" stroke="#3b7fd0" stroke-width="1"/><path d="M12 5 H17 L14.5 8 Z" fill="#222"/></svg><div class="t" style="left:329.4px;width:120px;text-align:center;top:104.85px;font-size:9px;color:#555;">New</div><div class="a" style="left:423px;top:45px;width:1px;height:67px;background:#e2e3e5"></div><svg class="a" style="left:439.5px;top:50px" width="18" height="23" viewBox="0 0 18 23"><path d="M0.5 0.5 H13 L17.5 5 V22.5 H0.5 Z" fill="#fff" stroke="#8e8e8e" stroke-width="0.8"/><path d="M4 11.5 L7.5 15 L14 7.5" fill="none" stroke="#e8622a" stroke-width="2"/></svg><div class="t" style="left:388.4px;width:120px;text-align:center;top:79.05px;font-size:9px;color:#1b1b1b;">Properties</div><svg class="a" style="left:446px;top:92px" width="5" height="3" viewBox="0 0 5 3"><path d="M0 0 H5 L2.5 3 Z" fill="#333"/></svg><svg class="a" style="left:474.5px;top:50px" width="11" height="12" viewBox="0 0 11 12"><rect x="0.5" y="0.5" width="9" height="11" fill="#e4ebf3" stroke="#a8b6c6" stroke-width="0.7"/><rect x="2" y="2" width="2" height="8" fill="#b0bccb"/></svg><div class="t" style="left:489.4px;top:52.65px;font-size:9px;color:#8f8f8f;">Open</div><svg class="a" style="left:514.5px;top:56.5px" width="5" height="3" viewBox="0 0 5 3"><path d="M0 0 H5 L2.5 3 Z" fill="#bbb"/></svg><svg class="a" style="left:474.5px;top:67px" width="11" height="12" viewBox="0 0 11 12"><path d="M0.5 0.5 H7 L10 3.5 V11.5 H0.5 Z" fill="#f0f4f8" stroke="#a8b6c6" stroke-width="0.7"/><path d="M2.5 9.5 L8 3" stroke="#9fb5d0" stroke-width="1"/></svg><div class="t" style="left:489.4px;top:69.85px;font-size:9px;color:#8f8f8f;">Edit</div><svg class="a" style="left:474.5px;top:84px" width="12" height="12" viewBox="0 0 12 12"><path d="M0.5 1 H4 L5 2 H8 V10 H0.5 Z" fill="#f2d27a"/><circle cx="8" cy="8.5" r="3" fill="#8a8a8a"/><path d="M8 6.8 V8.5 H9.5" stroke="#fff" stroke-width="0.7" fill="none"/><circle cx="5.5" cy="9.5" r="1.6" fill="#3caa3c"/></svg><div class="t" style="left:489.4px;top:87.05px;font-size:9px;color:#1b1b1b;">History</div><div class="t" style="left:414px;width:120px;text-align:center;top:104.85px;font-size:9px;color:#555;">Open</div><div class="a" style="left:527.5px;top:45px;width:1px;height:67px;background:#e2e3e5"></div><svg class="a" style="left:534.5px;top:50px" width="12" height="12" viewBox="0 0 12 12"><rect x="0" y="0" width="5.5" height="5.5" fill="#49a4ea"/><rect x="6.5" y="0" width="5.5" height="5.5" fill="#49a4ea"/><rect x="0" y="6.5" width="5.5" height="5.5" fill="#49a4ea"/><rect x="6.5" y="6.5" width="5.5" height="5.5" fill="#49a4ea"/></svg><div class="t" style="left:548.8px;top:52.65px;font-size:9px;color:#1b1b1b;">Select all</div><svg class="a" style="left:534.5px;top:67px" width="12" height="12" viewBox="0 0 12 12"><rect x="0.5" y="0.5" width="4.5" height="4.5" fill="none" stroke="#b5b5b5" stroke-width="0.8"/><rect x="0.5" y="7.0" width="4.5" height="4.5" fill="none" stroke="#b5b5b5" stroke-width="0.8"/><rect x="7.0" y="0.5" width="4.5" height="4.5" fill="none" stroke="#b5b5b5" stroke-width="0.8"/><rect x="7.0" y="7.0" width="4.5" height="4.5" fill="none" stroke="#b5b5b5" stroke-width="0.8"/></svg><div class="t" style="left:548.8px;top:69.85px;font-size:9px;color:#1b1b1b;">Select none</div><svg class="a" style="left:534.5px;top:84px" width="12" height="12" viewBox="0 0 12 12"><rect x="0.5" y="0.5" width="4.5" height="4.5" fill="none" stroke="#9cc8ef" stroke-width="0.8"/><rect x="6.5" y="0" width="5.5" height="5.5" fill="#49a4ea"/><rect x="0" y="6.5" width="5.5" height="5.5" fill="#49a4ea"/><rect x="7" y="7" width="4.5" height="4.5" fill="none" stroke="#9cc8ef" stroke-width="0.8"/></svg><div class="t" style="left:548.8px;top:87.05px;font-size:9px;color:#1b1b1b;">Invert selection</div><div class="t" style="left:512.4px;width:120px;text-align:center;top:104.85px;font-size:9px;color:#555;">Select</div><div class="a" style="left:618.7px;top:45px;width:1px;height:67px;background:#e2e3e5"></div><svg class="a" style="left:600.5px;top:31.5px" width="8" height="5" viewBox="0 0 8 5"><path d="M0.7 4.3 L4 1 L7.3 4.3" fill="none" stroke="#9a9a9a" stroke-width="1.1"/></svg><svg class="a" style="left:616px;top:27px" width="13" height="13" viewBox="0 0 13 13"><circle cx="6.5" cy="6.5" r="6.3" fill="#1a62c0"/><text x="6.5" y="10.3" font-size="10" font-weight="bold" fill="#fff" text-anchor="middle" font-family="Liberation Sans">?</text></svg><svg class="a" style="left:8px;top:121px" width="80" height="16" viewBox="0 0 80 16"><path d="M3 8 H14 M3 8 L7.5 3.5 M3 8 L7.5 12.5" stroke="#555" stroke-width="1.1" fill="none"/><path d="M26 8 H37 M37 8 L32.5 3.5 M37 8 L32.5 12.5" stroke="#b5b5b5" stroke-width="1.1" fill="none"/><path d="M47 6.5 L49.5 9 L52 6.5" stroke="#999" stroke-width="0.9" fill="none"/><path d="M65.5 14 V3 M65.5 3 L61 7.5 M65.5 3 L70 7.5" stroke="#333" stroke-width="1.1" fill="none"/></svg><div class="a" style="left:84px;top:120.5px;width:401.5px;height:17.5px;background:#fff;border:1px solid #d9d9d9"></div><svg class="a" style="left:88px;top:124px" width="9" height="11" viewBox="0 0 9 11"><path d="M0.5 1 L4 1 L5 2 L8.5 2 L8.5 10 L0.5 10 Z" fill="#f2d27a"/><path d="M0.5 2.5 L3.5 1.6 L3.5 10.4 L0.5 10 Z" fill="#e8bd4a"/><rect x="3.5" y="3" width="5" height="7" fill="#fbe4a0"/></svg><div class="a" style="left:472px;top:121px;width:1px;height:16px;background:#e5e5e5"></div><svg class="a" style="left:475px;top:123px" width="12" height="12" viewBox="0 0 12 12"><path d="M9.5 4.5 A4 4 0 1 0 10 7.5" stroke="#555" stroke-width="1" fill="none"/><path d="M7.5 1.5 L10 4.5 L7 5.5" stroke="#555" stroke-width="1" fill="none"/></svg><svg class="a" style="left:461.5px;top:127.5px" width="8" height="5" viewBox="0 0 8 5"><path d="M0.7 0.7 L4 4 L7.3 0.7" fill="none" stroke="#555" stroke-width="1.1"/></svg><div class="a" style="left:495.3px;top:120.5px;width:125.6px;height:17.5px;background:#fff;border:1px solid #d9d9d9"></div><div class="t" style="left:502.5px;top:126.15px;font-size:9px;color:#8a8a8a;letter-spacing:-0.48px;">Search C02533C1_TILES_MOTIC</div><svg class="a" style="left:605px;top:123px" width="11" height="12" viewBox="0 0 11 12"><circle cx="6.5" cy="4.5" r="3.5" fill="none" stroke="#444" stroke-width="1.1"/><path d="M4 7 L0.8 10.5" stroke="#444" stroke-width="1.3"/></svg><svg class="a" style="left:106px;top:126px" width="5" height="7" viewBox="0 0 5 7"><path d="M1 1 L3.8 3.5 L1 6" fill="none" stroke="#666" stroke-width="0.9"/></svg><div class="t" style="left:116px;top:126.15px;font-size:9px;color:#1b1b1b;">This PC</div><svg class="a" style="left:155px;top:126px" width="5" height="7" viewBox="0 0 5 7"><path d="M1 1 L3.8 3.5 L1 6" fill="none" stroke="#666" stroke-width="0.9"/></svg><div class="t" style="left:164.4px;top:126.15px;font-size:9px;color:#1b1b1b;">DATA (D:)</div><svg class="a" style="left:212.7px;top:126px" width="5" height="7" viewBox="0 0 5 7"><path d="M1 1 L3.8 3.5 L1 6" fill="none" stroke="#666" stroke-width="0.9"/></svg><div class="t" style="left:221.7px;top:126.15px;font-size:9px;color:#1b1b1b;">QC image</div><svg class="a" style="left:271px;top:126px" width="5" height="7" viewBox="0 0 5 7"><path d="M1 1 L3.8 3.5 L1 6" fill="none" stroke="#666" stroke-width="0.9"/></svg><div class="t" style="left:281.9px;top:126.15px;font-size:9px;color:#1b1b1b;letter-spacing:-0.48px;">C02533C1_TILES_MOTIC</div><div class="a" style="left:137.5px;top:143.5px;width:12.8px;height:214.5px;background:#f0f0f0"></div><div class="a" style="left:138.5px;top:180px;width:11px;height:97px;background:#cdcdcd"></div><svg class="a" style="left:140px;top:147.5px" width="8" height="5" viewBox="0 0 8 5"><path d="M0.7 4.3 L4 1 L7.3 4.3" fill="none" stroke="#606060" stroke-width="1.1"/></svg><svg class="a" style="left:140px;top:349.5px" width="8" height="5" viewBox="0 0 8 5"><path d="M0.7 0.7 L4 4 L7.3 0.7" fill="none" stroke="#606060" stroke-width="1.1"/></svg><div class="a" style="left:1px;top:339px;width:136px;height:18.3px;background:#d9d9d9"></div><svg class="a" style="left:20.5px;top:152.8px" width="13" height="12" viewBox="0 0 13 12"><path d="M2 1 L12 2.5 L11 8.5 L1.5 7.5 Z" fill="#3b9be0"/><path d="M0.5 9.5 L9 10.5 L7.5 11.5 L0 10.8 Z" fill="#9aa3ad"/></svg><div class="t" style="left:36.3px;top:155.65px;font-size:9px;color:#1b1b1b;">This PC</div><svg class="a" style="left:26.5px;top:171.73000000000002px" width="12" height="12" viewBox="0 0 12 12"><path d="M6 0.5 L11.5 3 L6 5.5 L0.5 3 Z" fill="#8be0f5"/><path d="M0.5 3 L6 5.5 V11.5 L0.5 9 Z" fill="#1aa5d8"/><path d="M11.5 3 L6 5.5 V11.5 L11.5 9 Z" fill="#0b7fbf"/></svg><div class="t" style="left:42.3px;top:174.58px;font-size:9px;color:#1b1b1b;">3D Objects</div><svg class="a" style="left:26.5px;top:191.66000000000003px" width="12" height="10" viewBox="0 0 12 10"><rect x="0.5" y="1" width="11" height="8" fill="#2a9bf5"/><rect x="0.5" y="8" width="11" height="1.2" fill="#1677c9"/></svg><div class="t" style="left:42.3px;top:193.51px;font-size:9px;color:#1b1b1b;">Desktop</div><svg class="a" style="left:26.5px;top:209.59px" width="10" height="12" viewBox="0 0 10 12"><path d="M0.5 0.5 H7 L9.5 3 V11.5 H0.5 Z" fill="#fafafa" stroke="#a0a0a0" stroke-width="0.7"/><rect x="2" y="4" width="6" height="0.8" fill="#7aa0c8"/><rect x="2" y="6" width="6" height="0.8" fill="#7aa0c8"/><rect x="2" y="8" width="6" height="0.8" fill="#7aa0c8"/></svg><div class="t" style="left:42.3px;top:212.44px;font-size:9px;color:#1b1b1b;">Documents</div><svg class="a" style="left:26.5px;top:228.52px" width="11" height="12" viewBox="0 0 11 12"><rect x="3.5" y="0" width="4" height="6" fill="#2f7fd6"/><path d="M0 5 H11 L5.5 11.5 Z" fill="#2f7fd6"/></svg><div class="t" style="left:42.3px;top:231.37px;font-size:9px;color:#1b1b1b;">Downloads</div><svg class="a" style="left:26.5px;top:247.45000000000002px" width="12" height="12" viewBox="0 0 12 12"><path d="M6 0.5 L8.5 3 L6 5.5 L3.5 3 Z" fill="#e8463a"/><path d="M3 3.5 L5.5 6 L3 8.5 L0.5 6 Z" fill="#2f8fe0"/><path d="M9 3.5 L11.5 6 L9 8.5 L6.5 6 Z" fill="#5cbc4a"/><path d="M6 6.5 L8.5 9 L6 11.5 L3.5 9 Z" fill="#f5b01a"/></svg><div class="t" style="left:42.3px;top:250.30px;font-size:9px;color:#1b1b1b;">FileAudit</div><svg class="a" style="left:26.5px;top:266.38px" width="10" height="13" viewBox="0 0 10 13"><path d="M4.5 1.5 V10" stroke="#2d8be0" stroke-width="1.2"/><path d="M4.5 1.2 Q7.5 3 8 5.8" stroke="#2d8be0" stroke-width="1.1" fill="none"/><ellipse cx="3.2" cy="10.3" rx="2" ry="1.6" fill="#2d8be0"/></svg><div class="t" style="left:42.3px;top:269.23px;font-size:9px;color:#1b1b1b;">Music</div><svg class="a" style="left:26.5px;top:286.31px" width="12" height="10" viewBox="0 0 12 10"><rect x="0.5" y="0.5" width="11" height="9" fill="#eef1f4" stroke="#a7b0ba" stroke-width="0.7"/><rect x="1.5" y="1.8" width="9" height="4" fill="#8cbbe6"/><path d="M1.5 8.5 L1.5 6 Q5 4.8 10.5 6.5 V8.5 Z" fill="#4a6e4a"/></svg><div class="t" style="left:42.3px;top:288.16px;font-size:9px;color:#1b1b1b;">Pictures</div><svg class="a" style="left:26.5px;top:304.24px" width="11" height="12" viewBox="0 0 11 12"><rect x="0" y="0" width="11" height="12" fill="#3a3a3a"/><rect x="2.6" y="0.8" width="5.8" height="5" fill="#e0a030"/><rect x="2.6" y="1" width="2.8" height="4.8" fill="#5ab040"/><rect x="2.6" y="6.4" width="5.8" height="4.8" fill="#3d7cc9"/><rect x="0.8" y="1.0" width="1.2" height="1.1" fill="#ddd"/><rect x="9" y="1.0" width="1.2" height="1.1" fill="#ddd"/><rect x="0.8" y="3.2" width="1.2" height="1.1" fill="#ddd"/><rect x="9" y="3.2" width="1.2" height="1.1" fill="#ddd"/><rect x="0.8" y="5.4" width="1.2" height="1.1" fill="#ddd"/><rect x="9" y="5.4" width="1.2" height="1.1" fill="#ddd"/><rect x="0.8" y="7.6" width="1.2" height="1.1" fill="#ddd"/><rect x="9" y="7.6" width="1.2" height="1.1" fill="#ddd"/><rect x="0.8" y="9.8" width="1.2" height="1.1" fill="#ddd"/><rect x="9" y="9.8" width="1.2" height="1.1" fill="#ddd"/></svg><div class="t" style="left:42.3px;top:307.09px;font-size:9px;color:#1b1b1b;">Videos</div><svg class="a" style="left:26.5px;top:323.67px" width="14" height="11" viewBox="0 0 14 11"><rect x="1" y="0" width="2.6" height="2.6" fill="#1fa1f0"/><rect x="4" y="0" width="2.6" height="2.6" fill="#1fa1f0"/><rect x="1" y="3" width="2.6" height="2.6" fill="#1fa1f0"/><rect x="4" y="3" width="2.6" height="2.6" fill="#1fa1f0"/><path d="M0.5 7 L9 6 L13.5 8 L13 10 L4.5 10.8 L0.5 9.5 Z" fill="#c4c4c4"/><path d="M0.5 9.5 L4.5 10.8 L13 10 " stroke="#6a6a6a" stroke-width="0.8" fill="none"/></svg><div class="t" style="left:42.3px;top:326.02px;font-size:9px;color:#1b1b1b;">Windows (C:)</div><svg class="a" style="left:26.5px;top:344.1px" width="14" height="8" viewBox="0 0 14 8"><path d="M0.5 3 L9 2 L13.5 4 L13 6 L4.5 6.8 L0.5 5.5 Z" fill="#cfcfcf"/><path d="M0.5 5.5 L4.5 6.8 L13 6" stroke="#4a4a4a" stroke-width="0.9" fill="none"/></svg><div class="t" style="left:42.3px;top:344.95px;font-size:9px;color:#1b1b1b;">DATA (D:)</div><div class="t" style="left:167px;top:150.15px;font-size:9px;color:#4c607a;">Name</div><svg class="a" style="left:287.5px;top:143px" width="8" height="5" viewBox="0 0 8 5"><path d="M0.7 4.3 L4 1 L7.3 4.3" fill="none" stroke="#888" stroke-width="0.9"/></svg><div class="a" style="left:165px;top:168px;width:500px;height:16.8px;background:#d9d9d9"></div><svg class="a" style="left:170px;top:170.8px" width="9" height="11" viewBox="0 0 9 11"><path d="M0.5 1 L4 1 L5 2 L8.5 2 L8.5 10 L0.5 10 Z" fill="#f2d27a"/><path d="M0.5 2.5 L3.5 1.6 L3.5 10.4 L0.5 10 Z" fill="#e8bd4a"/><rect x="3.5" y="3" width="5" height="7" fill="#fbe4a0"/></svg><div class="t" style="left:183.5px;top:173.15px;font-size:9px;color:#1b1b1b;letter-spacing:-0.35px;">C02533C1</div><svg class="a" style="left:169px;top:186.4px" width="10" height="13" viewBox="0 0 10 13"><path d="M0.5 0.5 H6.5 L9.5 3.5 V12.5 H0.5 Z" fill="#fff" stroke="#8b8b8b" stroke-width="0.7"/><circle cx="3" cy="7.5" r="1.6" fill="#aaa"/></svg><div class="t" style="left:183.5px;top:189.75px;font-size:9px;color:#1b1b1b;">1.ini</div><svg class="a" style="left:169px;top:203.0px" width="10" height="13" viewBox="0 0 10 13"><path d="M0.5 0.5 H6.5 L9.5 3.5 V12.5 H0.5 Z" fill="#fff" stroke="#6b6b6b" stroke-width="0.7"/><rect x="2.5" y="4.5" width="5" height="5" fill="#2d7fd8"/></svg><div class="t" style="left:183.5px;top:206.35px;font-size:9px;color:#1b1b1b;">3.jpg</div><svg class="a" style="left:169px;top:219.60000000000002px" width="10" height="13" viewBox="0 0 10 13"><path d="M0.5 0.5 H6.5 L9.5 3.5 V12.5 H0.5 Z" fill="#fff" stroke="#8b8b8b" stroke-width="0.7"/><circle cx="3" cy="7.5" r="1.6" fill="#aaa"/></svg><div class="t" style="left:183.5px;top:222.95px;font-size:9px;color:#1b1b1b;">info.ini</div><div class="a" style="left:154.5px;top:346px;width:480px;height:11.5px;background:#f0f0f0"></div><div class="a" style="left:166.5px;top:346.5px;width:470px;height:10.5px;background:#cdcdcd"></div><svg class="a" style="left:157px;top:348px" width="6" height="8" viewBox="0 0 6 8"><path d="M4.5 0.7 L1.2 4 L4.5 7.3" fill="none" stroke="#606060" stroke-width="1.1"/></svg><div class="t" style="left:11.6px;top:364.73px;font-size:8.5px;color:#333;">4 items</div><div class="t" style="left:58.8px;top:364.73px;font-size:8.5px;color:#333;">1 item selected</div><div class="a" style="left:50px;top:361px;width:1px;height:13px;background:#e8e8e8"></div><div class="a" style="left:131px;top:361px;width:1px;height:13px;background:#e8e8e8"></div></div></div>
<div class="a" style="left:827px;top:367px;width:632px;height:377px;background:#fff;box-shadow:0 0 14px 2px rgba(0,0,0,0.22);overflow:hidden"><div class="a" style="left:0px;top:0px;width:632px;height:377px"><svg class="a" style="left:8px;top:7px" width="9" height="11" viewBox="0 0 9 11"><path d="M0.5 1 L4 1 L5 2 L8.5 2 L8.5 10 L0.5 10 Z" fill="#f2d27a"/><path d="M0.5 2.5 L3.5 1.6 L3.5 10.4 L0.5 10 Z" fill="#e8bd4a"/><rect x="3.5" y="3" width="5" height="7" fill="#fbe4a0"/></svg><div class="a" style="left:25px;top:8px;width:1px;height:10px;background:#9a9a9a"></div><svg class="a" style="left:34px;top:7px" width="10" height="11" viewBox="0 0 10 11"><path d="M0.5 0.5 H7 L9.5 3 V10.5 H0.5 Z" fill="#fff" stroke="#8a8a8a" stroke-width="0.8"/><path d="M2.2 5.5 L4 7.5 L7.6 3.2" fill="none" stroke="#e8622a" stroke-width="1.2"/></svg><svg class="a" style="left:51px;top:7px" width="9" height="11" viewBox="0 0 9 11"><path d="M0.5 1 L4 1 L5 2 L8.5 2 L8.5 10 L0.5 10 Z" fill="#f2d27a"/><path d="M0.5 2.5 L3.5 1.6 L3.5 10.4 L0.5 10 Z" fill="#e8bd4a"/><rect x="3.5" y="3" width="5" height="7" fill="#fbe4a0"/></svg><svg class="a" style="left:67px;top:9px" width="8" height="8" viewBox="0 0 8 8"><rect x="0.5" y="1" width="6.5" height="1" fill="#222"/><path d="M0.5 3.5 H7 L3.75 7 Z" fill="#222"/></svg><div class="a" style="left:80px;top:8px;width:1px;height:10px;background:#9a9a9a"></div><div class="a" style="left:181px;top:3px;width:75px;height:21px;background:#f0ee7f"></div><div class="t" style="left:158.5px;width:120px;text-align:center;top:10.05px;font-size:9px;color:#333;">Manage</div><div class="t" style="left:266px;top:7.85px;font-size:9px;color:#1b1b1b;letter-spacing:-0.35px;">C02533C1</div><svg class="a" style="left:532px;top:5.5px" width="95" height="15" viewBox="0 0 95 15"><rect x="4.8" y="6.3" width="8.5" height="0.9" fill="#1a1a1a"/><rect x="40.4" y="2.7" width="8" height="8" fill="none" stroke="#1a1a1a" stroke-width="0.9"/><path d="M76.3 2.4 L85 11 M85 2.4 L76.3 11" stroke="#1a1a1a" stroke-width="0.9"/></svg><div class="a" style="left:0px;top:24.3px;width:44.8px;height:18.3px;background:#1e6fa0"></div><div class="t" style="left:-37.6px;width:120px;text-align:center;top:29.05px;font-size:9px;color:#fff;">File</div><div class="a" style="left:44.8px;top:24.3px;width:45.5px;height:19px;background:#f5f6f7;border:1px solid #e2e3e4;border-bottom:none"></div><div class="t" style="left:7.5px;width:120px;text-align:center;top:29.05px;font-size:9px;color:#1b1b1b;">Home</div><div class="t" style="left:54.5px;width:120px;text-align:center;top:29.05px;font-size:9px;color:#1b1b1b;">Share</div><div class="t" style="left:98.5px;width:120px;text-align:center;top:29.05px;font-size:9px;color:#1b1b1b;">View</div><div class="a" style="left:181px;top:24.3px;width:75px;height:19px;background:#fff;border:1px solid #e2e3e4;border-bottom:none;border-top:none"></div><div class="t" style="left:158.5px;width:120px;text-align:center;top:29.05px;font-size:9px;color:#1b1b1b;">Picture Tools</div><div class="a" style="left:0px;top:42.5px;width:632px;height:72.5px;background:#f5f6f7;border-bottom:1px solid #dadbdc"></div><svg class="a" style="left:22.5px;top:53px" width="17" height="17" viewBox="0 0 17 17"><path d="M9.5 1 L16 7.5 L14.5 8.5 L12.6 7.6 L9.8 10.4 L10.2 13.2 L9 14.4 L2.6 8 L3.8 6.8 L6.6 7.2 L9.4 4.4 L8.5 2.5 Z" fill="#8a9097"/><path d="M5.5 11.5 L1 16" stroke="#8a9097" stroke-width="1.6"/></svg><div class="t" style="left:-29px;width:120px;text-align:center;top:78.25px;font-size:9px;color:#1b1b1b;">Pin to Quick</div><div class="t" style="left:-29px;width:120px;text-align:center;top:88.25px;font-size:9px;color:#1b1b1b;">access</div><svg class="a" style="left:64px;top:49.5px" width="21" height="24" viewBox="0 0 21 24"><path d="M0.5 0.5 H8.5 L11 3 V17 H0.5 Z" fill="#fdfdfd" stroke="#c5ccd6" stroke-width="0.8"/><rect x="2" y="4.0" width="7.5" height="0.9" fill="#c9d7ea"/><rect x="2" y="6.6" width="7.5" height="0.9" fill="#c9d7ea"/><rect x="2" y="9.2" width="7.5" height="0.9" fill="#c9d7ea"/><rect x="2" y="11.8" width="7.5" height="0.9" fill="#c9d7ea"/><path d="M8.5 6.5 H17.5 L20 9 V23 H8.5 Z" fill="#fdfdfd" stroke="#c5ccd6" stroke-width="0.8"/><rect x="10" y="10.0" width="8.5" height="0.9" fill="#c9d7ea"/><rect x="10" y="12.6" width="8.5" height="0.9" fill="#c9d7ea"/><rect x="10" y="15.2" width="8.5" height="0.9" fill="#c9d7ea"/><rect x="10" y="17.8" width="8.5" height="0.9" fill="#c9d7ea"/><rect x="10" y="20.4" width="8.5" height="0.9" fill="#c9d7ea"/></svg><div class="t" style="left:14.400000000000006px;width:120px;text-align:center;top:78.25px;font-size:9px;color:#8f8f8f;">Copy</div><svg class="a" style="left:98.5px;top:49.5px" width="18" height="24" viewBox="0 0 18 24"><rect x="1" y="3" width="16" height="20" rx="1" fill="#e9eef6" stroke="#aab7cf" stroke-width="1.4"/><path d="M6 3.5 L9 0.8 L12 3.5 Z" fill="#aab7cf"/><rect x="3.5" y="6.0" width="11" height="0.7" fill="#c9d3e6"/><rect x="3.5" y="8.5" width="11" height="0.7" fill="#c9d3e6"/><rect x="3.5" y="11.0" width="11" height="0.7" fill="#c9d3e6"/><rect x="3.5" y="13.5" width="11" height="0.7" fill="#c9d3e6"/><rect x="3.5" y="16.0" width="11" height="0.7" fill="#c9d3e6"/><rect x="3.5" y="18.5" width="11" height="0.7" fill="#c9d3e6"/></svg><div class="t" style="left:47.2px;width:120px;text-align:center;top:78.25px;font-size:9px;color:#8f8f8f;">Paste</div><svg class="a" style="left:128px;top:49.5px" width="10" height="12" viewBox="0 0 10 12"><path d="M2.5 0.5 L6.5 8 M7.5 0.5 L3.5 8" stroke="#b9c0c9" stroke-width="0.9"/><circle cx="2.6" cy="9.5" r="1.8" fill="none" stroke="#b7bfca" stroke-width="1.1"/><circle cx="7.4" cy="9.5" r="1.8" fill="none" stroke="#b7bfca" stroke-width="1.1"/></svg><div class="t" style="left:141.5px;top:51.35px;font-size:9px;color:#8f8f8f;">Cut</div><svg class="a" style="left:128px;top:69.5px" width="12" height="7" viewBox="0 0 12 7"><rect x="0" y="0" width="12" height="7" fill="#dbe6f1"/><text x="1" y="5.5" font-size="5" fill="#9aa6b4" font-family="Liberation Sans">\-</text></svg><div class="t" style="left:141.5px;top:68.65px;font-size:9px;color:#8f8f8f;">Copy path</div><svg class="a" style="left:128.5px;top:84px" width="9" height="12" viewBox="0 0 9 12"><rect x="0.6" y="1.6" width="7.8" height="10" fill="#eef2f8" stroke="#9fb0cc" stroke-width="0.9"/><rect x="3" y="0.5" width="3" height="2" fill="#9fb0cc"/><path d="M3 9 L6 5 M4.5 5 H6 V6.5" stroke="#9fb0cc" stroke-width="0.8" fill="none"/></svg><div class="t" style="left:141.5px;top:85.95px;font-size:9px;color:#8f8f8f;">Paste shortcut</div><div class="t" style="left:43px;width:120px;text-align:center;top:104.05px;font-size:9px;color:#555;">Clipboard</div><div class="a" style="left:207px;top:45px;width:1px;height:67px;background:#e2e3e5"></div><svg class="a" style="left:218px;top:50px" width="22" height="23" viewBox="0 0 22 23"><rect x="0" y="0" width="17" height="22" fill="#e2e8f0"/><path d="M21.5 14.5 H13 V11 L6.5 16 L13 21 V17.8 H21.5 Z" fill="#c3cedb"/></svg><div class="t" style="left:166.5px;width:120px;text-align:center;top:78.25px;font-size:9px;color:#8f8f8f;">Move</div><div class="t" style="left:219.5px;top:88.25px;font-size:9px;color:#8f8f8f;">to</div><svg class="a" style="left:230px;top:90.7px" width="5" height="3" viewBox="0 0 5 3"><path d="M0 0 H5 L2.5 3 Z" fill="#aaa"/></svg><svg class="a" style="left:251px;top:49.5px" width="23" height="24" viewBox="0 0 23 24"><rect x="0" y="1" width="19" height="22.5" fill="#e2e8f0"/><path d="M9.5 0.5 H16 L18.5 3 V13 H9.5 Z" fill="#fafcff" stroke="#c5cfdc" stroke-width="0.7"/><path d="M12 3 H18.5 L21 5.5 V15.5 H12 Z" fill="#fafcff" stroke="#c5cfdc" stroke-width="0.7"/><rect x="13.5" y="7" width="6" height="0.8" fill="#8db6ea"/><rect x="13.5" y="9" width="6" height="0.8" fill="#8db6ea"/><rect x="13.5" y="11" width="6" height="0.8" fill="#8db6ea"/><rect x="13.5" y="13" width="6" height="0.8" fill="#8db6ea"/></svg><div class="t" style="left:200px;width:120px;text-align:center;top:78.25px;font-size:9px;color:#8f8f8f;">Copy</div><div class="t" style="left:253px;top:88.25px;font-size:9px;color:#8f8f8f;">to</div><svg class="a" style="left:263.5px;top:90.7px" width="5" height="3" viewBox="0 0 5 3"><path d="M0 0 H5 L2.5 3 Z" fill="#aaa"/></svg><div class="a" style="left:280px;top:50px;width:1px;height:45px;background:#e2e3e5"></div><svg class="a" style="left:289.5px;top:52px" width="20" height="20" viewBox="0 0 20 20"><path d="M2 2 L18 18 M18 2 L2 18" stroke="#5d6f8a" stroke-width="3.4"/></svg><div class="t" style="left:239.5px;width:120px;text-align:center;top:78.25px;font-size:9px;color:#1b1b1b;">Delete</div><svg class="a" style="left:297px;top:91.2px" width="5" height="3" viewBox="0 0 5 3"><path d="M0 0 H5 L2.5 3 Z" fill="#333"/></svg><svg class="a" style="left:322.5px;top:51px" width="23" height="21" viewBox="0 0 23 21"><rect x="0.5" y="5" width="20" height="10" fill="#fff" stroke="#dfe4ea" stroke-width="1"/><rect x="2.5" y="7" width="10" height="6" fill="#b9cde2"/><path d="M16 1 V20 M13.5 0.8 H18.5 M13.5 20.2 H18.5" stroke="#a4afbb" stroke-width="1.3"/></svg><div class="t" style="left:274px;width:120px;text-align:center;top:78.25px;font-size:9px;color:#8f8f8f;">Rename</div><div class="t" style="left:221.3px;width:120px;text-align:center;top:104.05px;font-size:9px;color:#555;">Organize</div><div class="a" style="left:357px;top:45px;width:1px;height:67px;background:#e2e3e5"></div><svg class="a" style="left:368px;top:50px" width="18" height="24" viewBox="0 0 18 24"><path d="M1 1 L6 0.5 L6 22 L1 23.5 Z" fill="#e9c25a"/><rect x="6" y="1" width="11" height="21" fill="#fbdc7f"/><path d="M1 1 L11 3 V23 L1 23.5 Z" fill="#f6d070"/></svg><div class="t" style="left:317px;width:120px;text-align:center;top:78.25px;font-size:9px;color:#1b1b1b;">New</div><div class="t" style="left:317px;width:120px;text-align:center;top:88.25px;font-size:9px;color:#1b1b1b;">folder</div><svg class="a" style="left:400px;top:51px" width="17" height="11" viewBox="0 0 17 11"><rect x="0.5" y="2.5" width="6" height="6" fill="#dde9f7" stroke="#6c9bd2" stroke-width="0.7"/><rect x="3.5" y="4.5" width="5" height="6" fill="#fff" stroke="#888" stroke-width="0.7"/><path d="M12 4 H17 L14.5 7 Z" fill="#222"/></svg><svg class="a" style="left:400px;top:67px" width="17" height="12" viewBox="0 0 17 12"><path d="M1.5 1 H7 L9 3 V11.5 H1.5 Z" fill="#fff" stroke="#777" stroke-width="0.7"/><path d="M0 3 H4" stroke="#3b7fd0" stroke-width="1"/><path d="M12 5 H17 L14.5 8 Z" fill="#222"/></svg><div class="t" style="left:329.4px;width:120px;text-align:center;top:104.05px;font-size:9px;color:#555;">New</div><div class="a" style="left:423px;top:45px;width:1px;height:67px;background:#e2e3e5"></div><svg class="a" style="left:439.5px;top:50px" width="18" height="23" viewBox="0 0 18 23"><path d="M0.5 0.5 H13 L17.5 5 V22.5 H0.5 Z" fill="#fff" stroke="#8e8e8e" stroke-width="0.8"/><path d="M4 11.5 L7.5 15 L14 7.5" fill="none" stroke="#e8622a" stroke-width="2"/></svg><div class="t" style="left:388.4px;width:120px;text-align:center;top:78.25px;font-size:9px;color:#1b1b1b;">Properties</div><svg class="a" style="left:446px;top:91.2px" width="5" height="3" viewBox="0 0 5 3"><path d="M0 0 H5 L2.5 3 Z" fill="#333"/></svg><svg class="a" style="left:474.5px;top:50px" width="11" height="12" viewBox="0 0 11 12"><rect x="0.5" y="0.5" width="9" height="11" fill="#e4ebf3" stroke="#a8b6c6" stroke-width="0.7"/><rect x="2" y="2" width="2" height="8" fill="#b0bccb"/></svg><div class="t" style="left:489.4px;top:51.85px;font-size:9px;color:#8f8f8f;">Open</div><svg class="a" style="left:514.5px;top:55.7px" width="5" height="3" viewBox="0 0 5 3"><path d="M0 0 H5 L2.5 3 Z" fill="#bbb"/></svg><svg class="a" style="left:474.5px;top:67px" width="11" height="12" viewBox="0 0 11 12"><path d="M0.5 0.5 H7 L10 3.5 V11.5 H0.5 Z" fill="#f0f4f8" stroke="#a8b6c6" stroke-width="0.7"/><path d="M2.5 9.5 L8 3" stroke="#9fb5d0" stroke-width="1"/></svg><div class="t" style="left:489.4px;top:69.05px;font-size:9px;color:#8f8f8f;">Edit</div><svg class="a" style="left:474.5px;top:84px" width="12" height="12" viewBox="0 0 12 12"><path d="M0.5 1 H4 L5 2 H8 V10 H0.5 Z" fill="#f2d27a"/><circle cx="8" cy="8.5" r="3" fill="#8a8a8a"/><path d="M8 6.8 V8.5 H9.5" stroke="#fff" stroke-width="0.7" fill="none"/><circle cx="5.5" cy="9.5" r="1.6" fill="#3caa3c"/></svg><div class="t" style="left:489.4px;top:86.25px;font-size:9px;color:#1b1b1b;">History</div><div class="t" style="left:414px;width:120px;text-align:center;top:104.05px;font-size:9px;color:#555;">Open</div><div class="a" style="left:527.5px;top:45px;width:1px;height:67px;background:#e2e3e5"></div><svg class="a" style="left:534.5px;top:50px" width="12" height="12" viewBox="0 0 12 12"><rect x="0" y="0" width="5.5" height="5.5" fill="#49a4ea"/><rect x="6.5" y="0" width="5.5" height="5.5" fill="#49a4ea"/><rect x="0" y="6.5" width="5.5" height="5.5" fill="#49a4ea"/><rect x="6.5" y="6.5" width="5.5" height="5.5" fill="#49a4ea"/></svg><div class="t" style="left:548.8px;top:51.85px;font-size:9px;color:#1b1b1b;">Select all</div><svg class="a" style="left:534.5px;top:67px" width="12" height="12" viewBox="0 0 12 12"><rect x="0.5" y="0.5" width="4.5" height="4.5" fill="none" stroke="#b5b5b5" stroke-width="0.8"/><rect x="0.5" y="7.0" width="4.5" height="4.5" fill="none" stroke="#b5b5b5" stroke-width="0.8"/><rect x="7.0" y="0.5" width="4.5" height="4.5" fill="none" stroke="#b5b5b5" stroke-width="0.8"/><rect x="7.0" y="7.0" width="4.5" height="4.5" fill="none" stroke="#b5b5b5" stroke-width="0.8"/></svg><div class="t" style="left:548.8px;top:69.05px;font-size:9px;color:#1b1b1b;">Select none</div><svg class="a" style="left:534.5px;top:84px" width="12" height="12" viewBox="0 0 12 12"><rect x="0.5" y="0.5" width="4.5" height="4.5" fill="none" stroke="#9cc8ef" stroke-width="0.8"/><rect x="6.5" y="0" width="5.5" height="5.5" fill="#49a4ea"/><rect x="0" y="6.5" width="5.5" height="5.5" fill="#49a4ea"/><rect x="7" y="7" width="4.5" height="4.5" fill="none" stroke="#9cc8ef" stroke-width="0.8"/></svg><div class="t" style="left:548.8px;top:86.25px;font-size:9px;color:#1b1b1b;">Invert selection</div><div class="t" style="left:512.4px;width:120px;text-align:center;top:104.05px;font-size:9px;color:#555;">Select</div><div class="a" style="left:618.7px;top:45px;width:1px;height:67px;background:#e2e3e5"></div><svg class="a" style="left:600.5px;top:31.5px" width="8" height="5" viewBox="0 0 8 5"><path d="M0.7 4.3 L4 1 L7.3 4.3" fill="none" stroke="#9a9a9a" stroke-width="1.1"/></svg><svg class="a" style="left:616px;top:27px" width="13" height="13" viewBox="0 0 13 13"><circle cx="6.5" cy="6.5" r="6.3" fill="#1a62c0"/><text x="6.5" y="10.3" font-size="10" font-weight="bold" fill="#fff" text-anchor="middle" font-family="Liberation Sans">?</text></svg><svg class="a" style="left:8px;top:121px" width="80" height="16" viewBox="0 0 80 16"><path d="M3 8 H14 M3 8 L7.5 3.5 M3 8 L7.5 12.5" stroke="#b5b5b5" stroke-width="1.1" fill="none"/><path d="M26 8 H37 M37 8 L32.5 3.5 M37 8 L32.5 12.5" stroke="#b5b5b5" stroke-width="1.1" fill="none"/><path d="M47 6.5 L49.5 9 L52 6.5" stroke="#999" stroke-width="0.9" fill="none"/><path d="M65.5 14 V3 M65.5 3 L61 7.5 M65.5 3 L70 7.5" stroke="#333" stroke-width="1.1" fill="none"/></svg><div class="a" style="left:84px;top:120.5px;width:401.5px;height:17.5px;background:#fff;border:1px solid #d9d9d9"></div><svg class="a" style="left:88px;top:124px" width="9" height="11" viewBox="0 0 9 11"><path d="M0.5 1 L4 1 L5 2 L8.5 2 L8.5 10 L0.5 10 Z" fill="#f2d27a"/><path d="M0.5 2.5 L3.5 1.6 L3.5 10.4 L0.5 10 Z" fill="#e8bd4a"/><rect x="3.5" y="3" width="5" height="7" fill="#fbe4a0"/></svg><div class="a" style="left:472px;top:121px;width:1px;height:16px;background:#e5e5e5"></div><svg class="a" style="left:475px;top:123px" width="12" height="12" viewBox="0 0 12 12"><path d="M9.5 4.5 A4 4 0 1 0 10 7.5" stroke="#555" stroke-width="1" fill="none"/><path d="M7.5 1.5 L10 4.5 L7 5.5" stroke="#555" stroke-width="1" fill="none"/></svg><svg class="a" style="left:461.5px;top:127.5px" width="8" height="5" viewBox="0 0 8 5"><path d="M0.7 0.7 L4 4 L7.3 0.7" fill="none" stroke="#555" stroke-width="1.1"/></svg><div class="a" style="left:495.3px;top:120.5px;width:125.6px;height:17.5px;background:#fff;border:1px solid #d9d9d9"></div><div class="t" style="left:502.5px;top:125.35px;font-size:9px;color:#8a8a8a;letter-spacing:-0.35px;">Search C02533C1</div><svg class="a" style="left:605px;top:123px" width="11" height="12" viewBox="0 0 11 12"><circle cx="6.5" cy="4.5" r="3.5" fill="none" stroke="#444" stroke-width="1.1"/><path d="M4 7 L0.8 10.5" stroke="#444" stroke-width="1.3"/></svg><svg class="a" style="left:104.5px;top:126px" width="8" height="7" viewBox="0 0 8 7"><path d="M3.5 1 L1 3.5 L3.5 6 M7 1 L4.5 3.5 L7 6" fill="none" stroke="#666" stroke-width="0.9"/></svg><div class="t" style="left:115.5px;top:125.35px;font-size:9px;color:#1b1b1b;">DATA (D:)</div><svg class="a" style="left:162.5px;top:126px" width="5" height="7" viewBox="0 0 5 7"><path d="M1 1 L3.8 3.5 L1 6" fill="none" stroke="#666" stroke-width="0.9"/></svg><div class="t" style="left:172.9px;top:125.35px;font-size:9px;color:#1b1b1b;">QC image</div><svg class="a" style="left:222px;top:126px" width="5" height="7" viewBox="0 0 5 7"><path d="M1 1 L3.8 3.5 L1 6" fill="none" stroke="#666" stroke-width="0.9"/></svg><div class="t" style="left:233.2px;top:125.35px;font-size:9px;color:#1b1b1b;letter-spacing:-0.48px;">C02533C1_TILES_MOTIC</div><svg class="a" style="left:339px;top:126px" width="5" height="7" viewBox="0 0 5 7"><path d="M1 1 L3.8 3.5 L1 6" fill="none" stroke="#666" stroke-width="0.9"/></svg><div class="t" style="left:349px;top:125.35px;font-size:9px;color:#1b1b1b;letter-spacing:-0.35px;">C02533C1</div><div class="a" style="left:137.5px;top:143.5px;width:12.8px;height:214.5px;background:#f0f0f0"></div><div class="a" style="left:138.5px;top:180px;width:11px;height:97px;background:#cdcdcd"></div><svg class="a" style="left:140px;top:147.5px" width="8" height="5" viewBox="0 0 8 5"><path d="M0.7 4.3 L4 1 L7.3 4.3" fill="none" stroke="#606060" stroke-width="1.1"/></svg><svg class="a" style="left:140px;top:349.5px" width="8" height="5" viewBox="0 0 8 5"><path d="M0.7 0.7 L4 4 L7.3 0.7" fill="none" stroke="#606060" stroke-width="1.1"/></svg><div class="a" style="left:1px;top:339px;width:136px;height:18.3px;background:#d9d9d9"></div><svg class="a" style="left:20.5px;top:152.8px" width="13" height="12" viewBox="0 0 13 12"><path d="M2 1 L12 2.5 L11 8.5 L1.5 7.5 Z" fill="#3b9be0"/><path d="M0.5 9.5 L9 10.5 L7.5 11.5 L0 10.8 Z" fill="#9aa3ad"/></svg><div class="t" style="left:36.3px;top:154.85px;font-size:9px;color:#1b1b1b;">This PC</div><svg class="a" style="left:26.5px;top:171.73000000000002px" width="12" height="12" viewBox="0 0 12 12"><path d="M6 0.5 L11.5 3 L6 5.5 L0.5 3 Z" fill="#8be0f5"/><path d="M0.5 3 L6 5.5 V11.5 L0.5 9 Z" fill="#1aa5d8"/><path d="M11.5 3 L6 5.5 V11.5 L11.5 9 Z" fill="#0b7fbf"/></svg><div class="t" style="left:42.3px;top:173.78px;font-size:9px;color:#1b1b1b;">3D Objects</div><svg class="a" style="left:26.5px;top:191.66000000000003px" width="12" height="10" viewBox="0 0 12 10"><rect x="0.5" y="1" width="11" height="8" fill="#2a9bf5"/><rect x="0.5" y="8" width="11" height="1.2" fill="#1677c9"/></svg><div class="t" style="left:42.3px;top:192.71px;font-size:9px;color:#1b1b1b;">Desktop</div><svg class="a" style="left:26.5px;top:209.59px" width="10" height="12" viewBox="0 0 10 12"><path d="M0.5 0.5 H7 L9.5 3 V11.5 H0.5 Z" fill="#fafafa" stroke="#a0a0a0" stroke-width="0.7"/><rect x="2" y="4" width="6" height="0.8" fill="#7aa0c8"/><rect x="2" y="6" width="6" height="0.8" fill="#7aa0c8"/><rect x="2" y="8" width="6" height="0.8" fill="#7aa0c8"/></svg><div class="t" style="left:42.3px;top:211.64px;font-size:9px;color:#1b1b1b;">Documents</div><svg class="a" style="left:26.5px;top:228.52px" width="11" height="12" viewBox="0 0 11 12"><rect x="3.5" y="0" width="4" height="6" fill="#2f7fd6"/><path d="M0 5 H11 L5.5 11.5 Z" fill="#2f7fd6"/></svg><div class="t" style="left:42.3px;top:230.57px;font-size:9px;color:#1b1b1b;">Downloads</div><svg class="a" style="left:26.5px;top:247.45000000000002px" width="12" height="12" viewBox="0 0 12 12"><path d="M6 0.5 L8.5 3 L6 5.5 L3.5 3 Z" fill="#e8463a"/><path d="M3 3.5 L5.5 6 L3 8.5 L0.5 6 Z" fill="#2f8fe0"/><path d="M9 3.5 L11.5 6 L9 8.5 L6.5 6 Z" fill="#5cbc4a"/><path d="M6 6.5 L8.5 9 L6 11.5 L3.5 9 Z" fill="#f5b01a"/></svg><div class="t" style="left:42.3px;top:249.50px;font-size:9px;color:#1b1b1b;">FileAudit</div><svg class="a" style="left:26.5px;top:266.38px" width="10" height="13" viewBox="0 0 10 13"><path d="M4.5 1.5 V10" stroke="#2d8be0" stroke-width="1.2"/><path d="M4.5 1.2 Q7.5 3 8 5.8" stroke="#2d8be0" stroke-width="1.1" fill="none"/><ellipse cx="3.2" cy="10.3" rx="2" ry="1.6" fill="#2d8be0"/></svg><div class="t" style="left:42.3px;top:268.43px;font-size:9px;color:#1b1b1b;">Music</div><svg class="a" style="left:26.5px;top:286.31px" width="12" height="10" viewBox="0 0 12 10"><rect x="0.5" y="0.5" width="11" height="9" fill="#eef1f4" stroke="#a7b0ba" stroke-width="0.7"/><rect x="1.5" y="1.8" width="9" height="4" fill="#8cbbe6"/><path d="M1.5 8.5 L1.5 6 Q5 4.8 10.5 6.5 V8.5 Z" fill="#4a6e4a"/></svg><div class="t" style="left:42.3px;top:287.36px;font-size:9px;color:#1b1b1b;">Pictures</div><svg class="a" style="left:26.5px;top:304.24px" width="11" height="12" viewBox="0 0 11 12"><rect x="0" y="0" width="11" height="12" fill="#3a3a3a"/><rect x="2.6" y="0.8" width="5.8" height="5" fill="#e0a030"/><rect x="2.6" y="1" width="2.8" height="4.8" fill="#5ab040"/><rect x="2.6" y="6.4" width="5.8" height="4.8" fill="#3d7cc9"/><rect x="0.8" y="1.0" width="1.2" height="1.1" fill="#ddd"/><rect x="9" y="1.0" width="1.2" height="1.1" fill="#ddd"/><rect x="0.8" y="3.2" width="1.2" height="1.1" fill="#ddd"/><rect x="9" y="3.2" width="1.2" height="1.1" fill="#ddd"/><rect x="0.8" y="5.4" width="1.2" height="1.1" fill="#ddd"/><rect x="9" y="5.4" width="1.2" height="1.1" fill="#ddd"/><rect x="0.8" y="7.6" width="1.2" height="1.1" fill="#ddd"/><rect x="9" y="7.6" width="1.2" height="1.1" fill="#ddd"/><rect x="0.8" y="9.8" width="1.2" height="1.1" fill="#ddd"/><rect x="9" y="9.8" width="1.2" height="1.1" fill="#ddd"/></svg><div class="t" style="left:42.3px;top:306.29px;font-size:9px;color:#1b1b1b;">Videos</div><svg class="a" style="left:26.5px;top:323.67px" width="14" height="11" viewBox="0 0 14 11"><rect x="1" y="0" width="2.6" height="2.6" fill="#1fa1f0"/><rect x="4" y="0" width="2.6" height="2.6" fill="#1fa1f0"/><rect x="1" y="3" width="2.6" height="2.6" fill="#1fa1f0"/><rect x="4" y="3" width="2.6" height="2.6" fill="#1fa1f0"/><path d="M0.5 7 L9 6 L13.5 8 L13 10 L4.5 10.8 L0.5 9.5 Z" fill="#c4c4c4"/><path d="M0.5 9.5 L4.5 10.8 L13 10 " stroke="#6a6a6a" stroke-width="0.8" fill="none"/></svg><div class="t" style="left:42.3px;top:325.22px;font-size:9px;color:#1b1b1b;">Windows (C:)</div><svg class="a" style="left:26.5px;top:344.1px" width="14" height="8" viewBox="0 0 14 8"><path d="M0.5 3 L9 2 L13.5 4 L13 6 L4.5 6.8 L0.5 5.5 Z" fill="#cfcfcf"/><path d="M0.5 5.5 L4.5 6.8 L13 6" stroke="#4a4a4a" stroke-width="0.9" fill="none"/></svg><div class="t" style="left:42.3px;top:344.15px;font-size:9px;color:#1b1b1b;">DATA (D:)</div><svg class="a" style="left:169.0px;top:143.0px;box-shadow:1px 1px 1.5px rgba(0,0,0,0.35)" width="71" height="58.7" viewBox="0 0 71 58.7" preserveAspectRatio="none"><rect width="71" height="59" fill="url(#tg_grey)"/><rect width="71" height="59" fill="#000" filter="url(#specks)" opacity="0.025"/><path d="M52 59 Q58 52 66 50 L71 48" stroke="#9a6a9a" stroke-width="0.6" fill="none"/><ellipse cx="68" cy="54" rx="12" ry="8" fill="#d4b8c4" opacity="0.5"/></svg><div class="t" style="left:145.0px;width:120px;text-align:center;top:207.22px;font-size:8.7px;color:#1b1b1b;letter-spacing:-0.35px;">C02533C1_0003_</div><div class="t" style="left:145.0px;width:120px;text-align:center;top:218.72px;font-size:8.7px;color:#1b1b1b;">0002_2023-07-17</div><div class="t" style="left:145.0px;width:120px;text-align:center;top:230.22px;font-size:8.7px;color:#1b1b1b;">_16-30-52-295.tif</div><svg class="a" style="left:259.6px;top:143.0px;box-shadow:1px 1px 1.5px rgba(0,0,0,0.35)" width="71" height="58.7" viewBox="0 0 71 58.7" preserveAspectRatio="none"><rect width="71" height="59" fill="url(#tg_grey)"/><g fill="#8a6aa8" opacity="0.7"><circle cx="55" cy="12" r="0.9"/><circle cx="58" cy="17" r="1"/><circle cx="52" cy="20" r="0.8"/><circle cx="62" cy="21" r="0.9"/><circle cx="57" cy="25" r="0.8"/></g><path d="M0 52 Q10 47 22 41" stroke="#8a7aa0" stroke-width="0.5" fill="none"/><path d="M7 59 Q20 44 46 33 L71 24 V59 Z" fill="#953a7e"/><path d="M7 59 Q20 44 46 33 L71 24 V59 Z" fill="#953a7e" filter="url(#hetex)" opacity="0.8"/></svg><div class="t" style="left:235.60000000000002px;width:120px;text-align:center;top:207.22px;font-size:8.7px;color:#1b1b1b;letter-spacing:-0.35px;">C02533C1_0003_</div><div class="t" style="left:235.60000000000002px;width:120px;text-align:center;top:218.72px;font-size:8.7px;color:#1b1b1b;">0003_2023-07-17</div><div class="t" style="left:235.60000000000002px;width:120px;text-align:center;top:230.22px;font-size:8.7px;color:#1b1b1b;">_16-30-53-428.tif</div><svg class="a" style="left:350.2px;top:143.0px;box-shadow:1px 1px 1.5px rgba(0,0,0,0.35)" width="71" height="58.7" viewBox="0 0 71 58.7" preserveAspectRatio="none"><rect width="71" height="59" fill="url(#tg_grey)"/><g fill="#8a7aa8" opacity="0.6"><circle cx="28" cy="5" r="1"/><circle cx="31" cy="8" r="0.9"/><circle cx="36" cy="4" r="1"/><circle cx="24" cy="10" r="0.8"/></g><path d="M0 24 Q30 20 71 12 V59 H0 Z" fill="#953a7e"/><path d="M0 24 Q30 20 71 12 V59 H0 Z" fill="#953a7e" filter="url(#hetex)" opacity="0.8"/></svg><div class="t" style="left:326.2px;width:120px;text-align:center;top:207.22px;font-size:8.7px;color:#1b1b1b;letter-spacing:-0.35px;">C02533C1_0003_</div><div class="t" style="left:326.2px;width:120px;text-align:center;top:218.72px;font-size:8.7px;color:#1b1b1b;">0004_2023-07-17</div><div class="t" style="left:326.2px;width:120px;text-align:center;top:230.22px;font-size:8.7px;color:#1b1b1b;">_16-30-54-756.tif</div><svg class="a" style="left:440.79999999999995px;top:143.0px;box-shadow:1px 1px 1.5px rgba(0,0,0,0.35)" width="71" height="58.7" viewBox="0 0 71 58.7" preserveAspectRatio="none"><rect width="71" height="59" fill="url(#tg_grey)"/><path d="M0 6 Q35 4 71 1.5 V59 H0 Z" fill="#953a7e"/><path d="M0 6 Q35 4 71 1.5 V59 H0 Z" fill="#953a7e" filter="url(#hetex)" opacity="0.8"/></svg><div class="t" style="left:416.79999999999995px;width:120px;text-align:center;top:207.22px;font-size:8.7px;color:#1b1b1b;letter-spacing:-0.35px;">C02533C1_0003_</div><div class="t" style="left:416.79999999999995px;width:120px;text-align:center;top:218.72px;font-size:8.7px;color:#1b1b1b;">0005_2023-07-17</div><div class="t" style="left:416.79999999999995px;width:120px;text-align:center;top:230.22px;font-size:8.7px;color:#1b1b1b;">_16-30-55-951.tif</div><svg class="a" style="left:531.4px;top:143.0px;box-shadow:1px 1px 1.5px rgba(0,0,0,0.35)" width="71" height="58.7" viewBox="0 0 71 58.7" preserveAspectRatio="none"><rect width="71" height="59" fill="url(#tg_grey)"/><path d="M0 0 H12 Q11 16 22 28 Q36 42 52 52 L57 59 H0 Z M46 0 H71 V48 Q66 36 60 22 Q54 8 46 0 Z" fill="#953a7e"/><path d="M0 0 H12 Q11 16 22 28 Q36 42 52 52 L57 59 H0 Z M46 0 H71 V48 Q66 36 60 22 Q54 8 46 0 Z" fill="#953a7e" filter="url(#hetex)" opacity="0.8"/><path d="M58 8 Q66 16 69 32 L71 40 V6 Z" fill="#6a2a6e" opacity="0.6"/></svg><div class="t" style="left:507.4px;width:120px;text-align:center;top:207.22px;font-size:8.7px;color:#1b1b1b;letter-spacing:-0.35px;">C02533C1_0003_</div><div class="t" style="left:507.4px;width:120px;text-align:center;top:218.72px;font-size:8.7px;color:#1b1b1b;">0006_2023-07-17</div><div class="t" style="left:507.4px;width:120px;text-align:center;top:230.22px;font-size:8.7px;color:#1b1b1b;">_16-30-57-288.tif</div><svg class="a" style="left:169.0px;top:258.2px;box-shadow:1px 1px 1.5px rgba(0,0,0,0.35)" width="71" height="58.7" viewBox="0 0 71 58.7" preserveAspectRatio="none"><rect width="71" height="59" fill="url(#tg_grey)"/><path d="M0 0 H19 Q23 10 23 22 Q24 38 22 46 Q17 55 10 59 H0 Z" fill="#a694b6" opacity="0.6"/><path d="M0 0 H19 Q23 10 23 22 Q24 38 22 46 Q17 55 10 59 H0 Z" fill="#9a86ae" filter="url(#hetex)" opacity="0.35"/><path d="M0 7.5 Q9 11 12.5 22 Q14 33 9.5 39.5 Q5 44 0 44 Z" fill="#7a4894"/><path d="M11 42 L15 40.5" stroke="#d23a5a" stroke-width="1.2"/><g fill="#8a7aa8" opacity="0.6"><circle cx="32" cy="2" r="0.9"/><circle cx="35" cy="3.5" r="0.8"/><circle cx="27" cy="14" r="0.7"/></g></svg><div class="t" style="left:145.0px;width:120px;text-align:center;top:322.41px;font-size:8.7px;color:#1b1b1b;letter-spacing:-0.35px;">C02533C1_0003_</div><div class="t" style="left:145.0px;width:120px;text-align:center;top:333.91px;font-size:8.7px;color:#1b1b1b;">0007_2023-07-17</div><div class="t" style="left:145.0px;width:120px;text-align:center;top:345.41px;font-size:8.7px;color:#1b1b1b;">_16-30-59-044.tif</div><svg class="a" style="left:259.6px;top:258.2px;box-shadow:1px 1px 1.5px rgba(0,0,0,0.35)" width="71" height="58.7" viewBox="0 0 71 58.7" preserveAspectRatio="none"><rect width="71" height="59" fill="url(#tg_grey2)"/><rect width="71" height="59" fill="#000" filter="url(#specks)" opacity="0.02"/></svg><div class="t" style="left:235.60000000000002px;width:120px;text-align:center;top:322.41px;font-size:8.7px;color:#1b1b1b;letter-spacing:-0.35px;">C02533C1_0003_</div><div class="t" style="left:235.60000000000002px;width:120px;text-align:center;top:333.91px;font-size:8.7px;color:#1b1b1b;">0008_2023-07-17</div><div class="t" style="left:235.60000000000002px;width:120px;text-align:center;top:345.41px;font-size:8.7px;color:#1b1b1b;">_16-31-00-984.tif</div><svg class="a" style="left:350.2px;top:258.2px;box-shadow:1px 1px 1.5px rgba(0,0,0,0.35)" width="71" height="58.7" viewBox="0 0 71 58.7" preserveAspectRatio="none"><rect width="71" height="59" fill="url(#tg_dark)"/></svg><div class="t" style="left:326.2px;width:120px;text-align:center;top:322.41px;font-size:8.7px;color:#1b1b1b;letter-spacing:-0.35px;">C02533C1_0003_</div><div class="t" style="left:326.2px;width:120px;text-align:center;top:333.91px;font-size:8.7px;color:#1b1b1b;">0009_2023-07-17</div><div class="t" style="left:326.2px;width:120px;text-align:center;top:345.41px;font-size:8.7px;color:#1b1b1b;">_16-31-02-193.tif</div><svg class="a" style="left:440.79999999999995px;top:258.2px;box-shadow:1px 1px 1.5px rgba(0,0,0,0.35)" width="71" height="58.7" viewBox="0 0 71 58.7" preserveAspectRatio="none"><rect width="71" height="59" fill="url(#tg_beige)"/><rect width="71" height="59" fill="#000" filter="url(#specks)" opacity="0.025"/><ellipse cx="66" cy="50" rx="14" ry="10" fill="#dab8b0" opacity="0.45"/></svg><div class="t" style="left:416.79999999999995px;width:120px;text-align:center;top:322.41px;font-size:8.7px;color:#1b1b1b;letter-spacing:-0.35px;">C02533C1_0003_</div><div class="t" style="left:416.79999999999995px;width:120px;text-align:center;top:333.91px;font-size:8.7px;color:#1b1b1b;">0010_2023-07-17</div><div class="t" style="left:416.79999999999995px;width:120px;text-align:center;top:345.41px;font-size:8.7px;color:#1b1b1b;">_16-31-03-423.tif</div><svg class="a" style="left:531.4px;top:258.2px;box-shadow:1px 1px 1.5px rgba(0,0,0,0.35)" width="71" height="58.7" viewBox="0 0 71 58.7" preserveAspectRatio="none"><rect width="71" height="59" fill="url(#tg_grey2)"/><rect width="9.6" height="59" fill="#1e1e1e"/></svg><div class="t" style="left:507.4px;width:120px;text-align:center;top:322.41px;font-size:8.7px;color:#1b1b1b;letter-spacing:-0.35px;">C02533C1_0004_</div><div class="t" style="left:507.4px;width:120px;text-align:center;top:333.91px;font-size:8.7px;color:#1b1b1b;">0000_2023-07-17</div><div class="t" style="left:507.4px;width:120px;text-align:center;top:345.41px;font-size:8.7px;color:#1b1b1b;">_16-31-04-891.tif</div><div class="a" style="left:618px;top:143px;width:12.6px;height:215px;background:#f0f0f0"></div><div class="a" style="left:619px;top:206px;width:10.6px;height:14px;background:#cdcdcd"></div><svg class="a" style="left:620.3px;top:147.5px" width="8" height="5" viewBox="0 0 8 5"><path d="M0.7 4.3 L4 1 L7.3 4.3" fill="none" stroke="#606060" stroke-width="1.1"/></svg><svg class="a" style="left:620.3px;top:349.5px" width="8" height="5" viewBox="0 0 8 5"><path d="M0.7 0.7 L4 4 L7.3 0.7" fill="none" stroke="#606060" stroke-width="1.1"/></svg><svg class="a" style="left:596px;top:362px" width="12" height="11" viewBox="0 0 12 11"><rect x="0.5" y="0.5" width="2.5" height="10" fill="#fff" stroke="#bbb" stroke-width="0.6"/><rect x="4.5" y="2" width="3" height="1" fill="#555"/><rect x="8.5" y="2" width="3" height="1" fill="#555"/><rect x="4.5" y="5" width="3" height="1" fill="#555"/><rect x="8.5" y="5" width="3" height="1" fill="#555"/><rect x="4.5" y="8" width="3" height="1" fill="#555"/><rect x="8.5" y="8" width="3" height="1" fill="#555"/></svg><svg class="a" style="left:613px;top:362px" width="12" height="10" viewBox="0 0 12 10"><rect x="0.5" y="0.5" width="11" height="8.5" fill="#dfe9f3" stroke="#9aa6b2" stroke-width="0.6"/><rect x="1.5" y="2" width="9" height="3" fill="#5aa0d8"/><path d="M1.5 7.8 L5 5.5 L10.5 7 V8 H1.5 Z" fill="#2f5a30"/></svg><div class="t" style="left:12.7px;top:363.93px;font-size:8.5px;color:#333;">132 items</div><div class="a" style="left:58px;top:361px;width:1px;height:13px;background:#e8e8e8"></div></div></div>
<div class="a" style="left:1127px;top:42px;width:375px;height:99.5px;background:#33137f;border-radius:2px;box-shadow:0 2px 5px rgba(0,0,0,0.35)"></div>
<div class="t" style="left:1137px;top:55px;font-size:15px;font-weight:bold;color:#fff">QC Motic image tiles:</div>
<div class="a" style="left:1147.5px;top:80.5px;width:3px;height:3px;border-radius:50%;background:#fff"></div>
<div class="t" style="left:1161px;top:75.84px;font-size:14.6px;color:#fff;letter-spacing:0.63px">Drag &amp; drop the folder that including:</div>
<div class="a" style="left:1171.5px;top:99.5px;width:3px;height:3px;border-radius:50%;background:#fff"></div>
<div class="t" style="left:1185.3px;top:94.84px;font-size:14.6px;color:#fff;letter-spacing:0.63px">a folder of image tiles in <span style="font-family:'Liberation Mono',monospace;font-size:13.8px;letter-spacing:0">.tif</span> format</div>
<div class="a" style="left:1171.5px;top:118.5px;width:3px;height:3px;border-radius:50%;background:#fff"></div>
<div class="t" style="left:1185.3px;top:113.84px;font-size:14.6px;color:#fff;letter-spacing:0.63px"><span style="font-family:'Liberation Mono',monospace;font-size:13.8px;letter-spacing:0">a .ini</span> configuration file</div>
<div class="a" style="left:403px;top:206px;width:102px;height:101.7px;background:rgba(204,232,252,0.32);border:1px solid rgba(160,205,240,0.35);box-shadow:1.5px 1.5px 2px rgba(0,0,0,0.18)"></div>
<svg class="a" style="left:422.8px;top:219px" width="62" height="83" viewBox="0 0 62 83"><rect x="0" y="0" width="50" height="70" fill="#f6d57a"/><path d="M30 6 L48 9 L61 10 L61 72 L44 72 Z" fill="#f4f5f6"/><path d="M48 9 L61 10 L61 11 L48 10 Z" fill="#d0d0d0"/><defs><clipPath id="gclip"><path d="M17 9.5 L44 19 L44 76 L17 76 Z"/></clipPath></defs><path d="M44 12 L58 15 L61 22 L61 72 L44 72 Z" fill="#eef0f2"/><path d="M17 9.5 L44 19 L44 76 L17 76 Z" fill="#c9cacd"/><g clip-path="url(#gclip)"><path d="M21.3 8 V76" stroke="#a2a3a6" stroke-width="0.5"/><path d="M25.6 8 V76" stroke="#a2a3a6" stroke-width="0.5"/><path d="M29.9 8 V76" stroke="#a2a3a6" stroke-width="0.5"/><path d="M34.2 8 V76" stroke="#a2a3a6" stroke-width="0.5"/><path d="M38.5 8 V76" stroke="#a2a3a6" stroke-width="0.5"/><path d="M42.8 8 V76" stroke="#a2a3a6" stroke-width="0.5"/><path d="M17 12.3 H44" stroke="#a2a3a6" stroke-width="0.5"/><path d="M17 16.6 H44" stroke="#a2a3a6" stroke-width="0.5"/><path d="M17 20.9 H44" stroke="#a2a3a6" stroke-width="0.5"/><path d="M17 25.2 H44" stroke="#a2a3a6" stroke-width="0.5"/><path d="M17 29.5 H44" stroke="#a2a3a6" stroke-width="0.5"/><path d="M17 33.8 H44" stroke="#a2a3a6" stroke-width="0.5"/><path d="M17 38.1 H44" stroke="#a2a3a6" stroke-width="0.5"/><path d="M17 42.4 H44" stroke="#a2a3a6" stroke-width="0.5"/><path d="M17 46.7 H44" stroke="#a2a3a6" stroke-width="0.5"/><path d="M17 51.0 H44" stroke="#a2a3a6" stroke-width="0.5"/><path d="M17 55.3 H44" stroke="#a2a3a6" stroke-width="0.5"/><path d="M17 59.6 H44" stroke="#a2a3a6" stroke-width="0.5"/><path d="M17 63.9 H44" stroke="#a2a3a6" stroke-width="0.5"/><path d="M17 68.2 H44" stroke="#a2a3a6" stroke-width="0.5"/><path d="M17 72.5 H44" stroke="#a2a3a6" stroke-width="0.5"/><path d="M17 76.8 H44" stroke="#a2a3a6" stroke-width="0.5"/></g><path d="M13 5 L44 16.5" stroke="#3b3b3b" stroke-width="1.8"/><path d="M17 76 L44 76" stroke="#6a6a6a" stroke-width="1.2"/><path d="M22 40 Q27 36 31.5 41 Q35 47 32 55 Q28 60 22 57 Q19 50 22 40 Z" fill="#a07aae" opacity="0.9"/><path d="M0 0.8 L17 12.5 L17 82 L0 69 Z" fill="#f9e59f"/><path d="M17 12.5 L17 82" stroke="#e8cd72" stroke-width="0.6"/></svg>
<div class="a" style="left:455px;top:292.3px;width:53.6px;height:19.1px;background:#fff;border:1px solid #6e6e6e"></div>
<svg class="a" style="left:459.5px;top:295.5px" width="12" height="12" viewBox="0 0 12 12"><path d="M6 0.5 V11.5 M0.5 6 H11.5" stroke="#2b3cc0" stroke-width="1.5"/></svg>
<div class="t" style="left:474.9px;top:296.17px;font-size:11.5px;color:#2b3cc0">Copy</div>
</body></html>
